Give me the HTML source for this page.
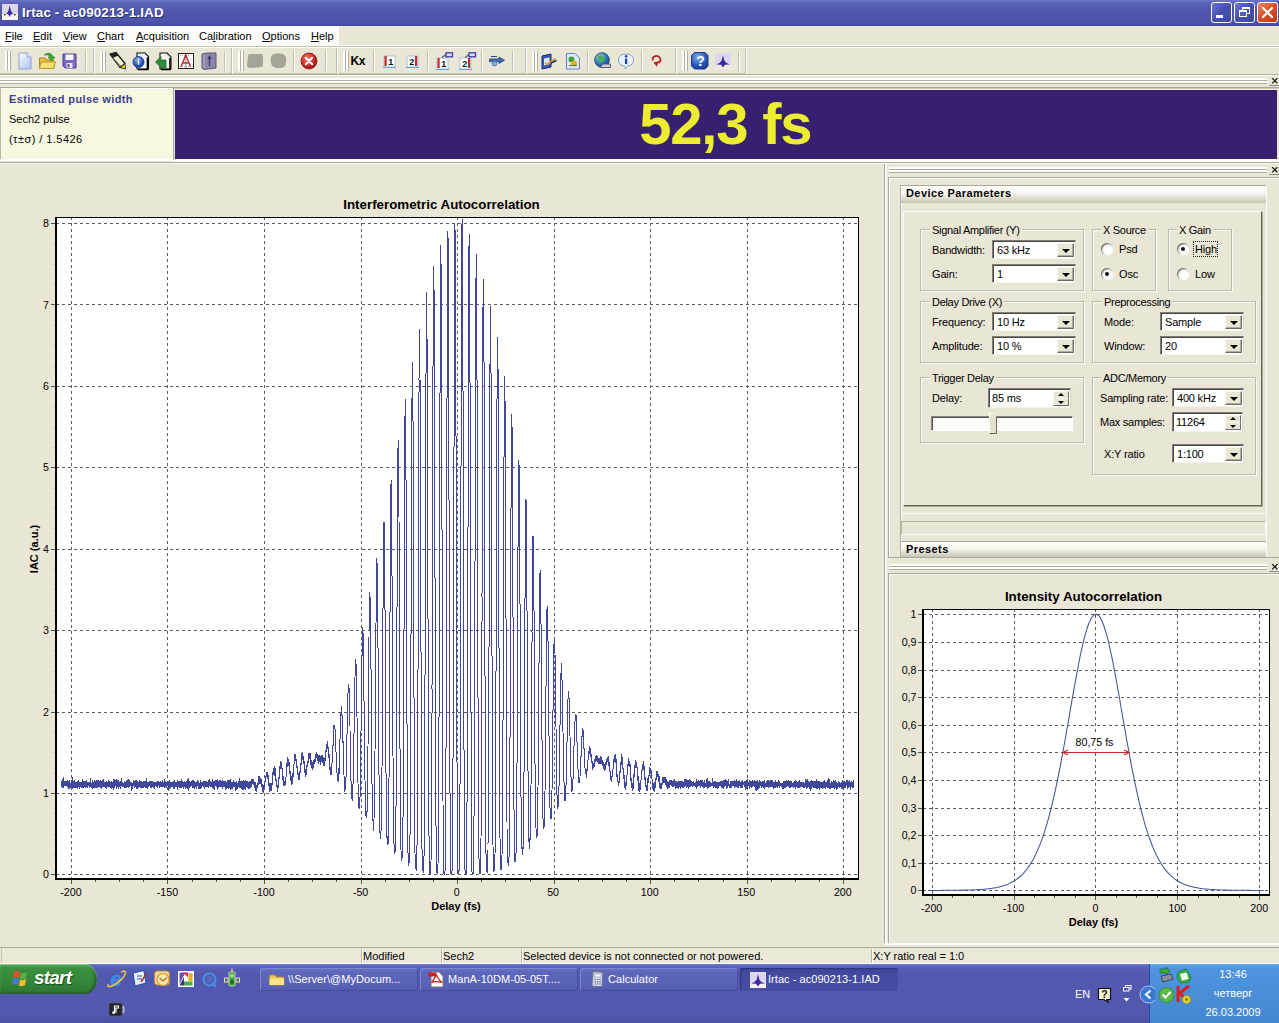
<!DOCTYPE html><html><head><meta charset="utf-8"><style>
*{box-sizing:border-box;margin:0;padding:0}
html,body{width:1279px;height:1023px;overflow:hidden;background:#e9e6d5;font-family:"Liberation Sans",sans-serif;font-size:11px;color:#000}
.a{position:absolute}
.t{position:absolute;white-space:nowrap;line-height:1}
.b{font-weight:bold}
.gb{position:absolute;border:1px solid #bcbaab;box-shadow:1px 1px 0 #fbfbf6, inset 1px 1px 0 #fbfbf6}
.gl{position:absolute;background:#e9e6d5;padding:0 2px;white-space:nowrap;line-height:1;font-size:11px;top:-5px;letter-spacing:-0.3px}
.cb{position:absolute;background:#fff;border:1px solid #7f7d72;border-right-color:#d8d6c8;border-bottom-color:#f4f3ec;box-shadow:inset 1px 1px 0 #4a4a44}
.cb .v{position:absolute;left:4px;top:4px;line-height:1;white-space:nowrap;font-size:11px;letter-spacing:-0.2px}
.dd{position:absolute;right:1px;top:2px;bottom:1px;width:17px;background:#e9e6d5;border:1px solid #f8f7f0;border-right-color:#6e6c62;border-bottom-color:#6e6c62;box-shadow:inset -1px -1px 0 #aeac9e}
.dd:after{content:"";position:absolute;left:4px;top:5px;border:4px solid transparent;border-top:4px solid #000;border-bottom:none}
.sp{position:absolute;right:1px;width:16px;height:8px;background:#e9e6d5;border:1px solid #f8f7f0;border-right-color:#6e6c62;border-bottom-color:#6e6c62}
.sp:after{content:"";position:absolute;left:4px;top:1px;border:3px solid transparent;border-bottom:3px solid #000;border-top:none}
.sd:after{border:3px solid transparent;border-top:3px solid #000;border-bottom:none;top:2px}
.hdr{position:absolute;background:linear-gradient(#fefefd 0%,#f6f5ee 45%,#d4d2c3 85%,#c6c4b4 100%)}
</style></head><body>
<div class="a" style="left:0;top:0;width:1279px;height:26px;background:linear-gradient(#6a78c8 0%,#5a62b8 12%,#5157ad 40%,#4e54aa 80%,#4a4fa6 94%,#3c409a 100%)"></div>
<div class="a" style="left:2px;top:4px;width:16px;height:16px;background:#d9d6ea"></div>
<svg class="a" style="left:2px;top:4px" width="16" height="16"><rect y="10" width="16" height="6" fill="#f6f5ee"/><path d="M7.7,1.5L9,7L11,9.5L8.6,11L7.7,13L6.8,11L4.4,9.5L6.4,7Z" fill="#3a2aa0"/><rect x="2" y="10" width="1.4" height="1.4" fill="#111"/><rect x="12" y="10" width="1.4" height="1.4" fill="#111"/></svg>
<div class="t" style="left:22px;top:6.199999999999999px;font-size:13.5px;color:#fff;font-weight:bold;letter-spacing:0.1px;text-shadow:1px 1px 0 #2a2f7a;">Irtac - ac090213-1.IAD</div>
<div class="a" style="left:1211px;top:2px;width:21px;height:21px;border:1px solid #fff;border-radius:3px;background:linear-gradient(135deg,#6a78c8,#4650ae 50%,#3e48a4)"></div>
<div class="a" style="left:1234px;top:2px;width:21px;height:21px;border:1px solid #fff;border-radius:3px;background:linear-gradient(135deg,#6a78c8,#4650ae 50%,#3e48a4)"></div>
<div class="a" style="left:1257px;top:2px;width:21px;height:21px;border:1px solid #fff;border-radius:3px;background:linear-gradient(135deg,#e88a68,#d84c24 50%,#c03c14)"></div>
<div class="a" style="left:1216px;top:15px;width:7px;height:3px;background:#fff"></div>
<div class="a" style="left:1242px;top:7px;width:8px;height:7px;border:1px solid #fff;border-top-width:2px"></div>
<div class="a" style="left:1239px;top:10px;width:8px;height:7px;border:1px solid #fff;border-top-width:2px;background:#5560b8"></div>
<svg class="a" style="left:1257px;top:2px" width="21" height="21"><path d="M6 6 L15 15 M15 6 L6 15" stroke="#fff" stroke-width="2.2" stroke-linecap="round"/></svg>
<div class="a" style="left:0;top:26px;width:339px;height:20px;background:#fcfcfa"></div>
<div class="t" style="left:5px;top:31.2px;font-size:11px;color:#000;"><u>F</u>ile</div>
<div class="t" style="left:33px;top:31.2px;font-size:11px;color:#000;"><u>E</u>dit</div>
<div class="t" style="left:63px;top:31.2px;font-size:11px;color:#000;"><u>V</u>iew</div>
<div class="t" style="left:97px;top:31.2px;font-size:11px;color:#000;"><u>C</u>hart</div>
<div class="t" style="left:136px;top:31.2px;font-size:11px;color:#000;"><u>A</u>cquisition</div>
<div class="t" style="left:199px;top:31.2px;font-size:11px;color:#000;">Ca<u>l</u>ibration</div>
<div class="t" style="left:262px;top:31.2px;font-size:11px;color:#000;"><u>O</u>ptions</div>
<div class="t" style="left:311px;top:31.2px;font-size:11px;color:#000;"><u>H</u>elp</div>
<div class="a" style="left:0;top:45px;width:1279px;height:1px;background:#fbfbf7"></div>
<div class="a" style="left:0;top:46px;width:1279px;height:1px;background:#c4c2b3"></div>
<div class="a" style="left:0;top:47px;width:1279px;height:1px;background:#fbfbf7"></div>
<div class="a" style="left:0px;top:48px;width:94px;height:26px;border-right:1px solid #c0beaf;border-bottom:1px solid #c0beaf;box-shadow:1px 0 0 #fff"></div>
<div class="a" style="left:5px;top:51px;width:3px;height:20px;border-left:2px solid #fdfdfa;border-right:1px solid #b0ae9f"></div>
<div class="a" style="left:8px;top:51px;width:3px;height:20px;border-left:2px solid #fdfdfa;border-right:1px solid #b0ae9f"></div>
<div class="a" style="left:95px;top:48px;width:137px;height:26px;border-right:1px solid #c0beaf;border-bottom:1px solid #c0beaf;box-shadow:1px 0 0 #fff"></div>
<div class="a" style="left:100px;top:51px;width:3px;height:20px;border-left:2px solid #fdfdfa;border-right:1px solid #b0ae9f"></div>
<div class="a" style="left:103px;top:51px;width:3px;height:20px;border-left:2px solid #fdfdfa;border-right:1px solid #b0ae9f"></div>
<div class="a" style="left:233px;top:48px;width:104px;height:26px;border-right:1px solid #c0beaf;border-bottom:1px solid #c0beaf;box-shadow:1px 0 0 #fff"></div>
<div class="a" style="left:238px;top:51px;width:3px;height:20px;border-left:2px solid #fdfdfa;border-right:1px solid #b0ae9f"></div>
<div class="a" style="left:241px;top:51px;width:3px;height:20px;border-left:2px solid #fdfdfa;border-right:1px solid #b0ae9f"></div>
<div class="a" style="left:338px;top:48px;width:188px;height:26px;border-right:1px solid #c0beaf;border-bottom:1px solid #c0beaf;box-shadow:1px 0 0 #fff"></div>
<div class="a" style="left:343px;top:51px;width:3px;height:20px;border-left:2px solid #fdfdfa;border-right:1px solid #b0ae9f"></div>
<div class="a" style="left:346px;top:51px;width:3px;height:20px;border-left:2px solid #fdfdfa;border-right:1px solid #b0ae9f"></div>
<div class="a" style="left:527px;top:48px;width:149px;height:26px;border-right:1px solid #c0beaf;border-bottom:1px solid #c0beaf;box-shadow:1px 0 0 #fff"></div>
<div class="a" style="left:532px;top:51px;width:3px;height:20px;border-left:2px solid #fdfdfa;border-right:1px solid #b0ae9f"></div>
<div class="a" style="left:535px;top:51px;width:3px;height:20px;border-left:2px solid #fdfdfa;border-right:1px solid #b0ae9f"></div>
<div class="a" style="left:677px;top:48px;width:69px;height:26px;border-right:1px solid #c0beaf;border-bottom:1px solid #c0beaf;box-shadow:1px 0 0 #fff"></div>
<div class="a" style="left:682px;top:51px;width:3px;height:20px;border-left:2px solid #fdfdfa;border-right:1px solid #b0ae9f"></div>
<div class="a" style="left:685px;top:51px;width:3px;height:20px;border-left:2px solid #fdfdfa;border-right:1px solid #b0ae9f"></div>
<div class="a" style="left:0;top:74px;width:746px;height:1px;background:#c0beaf"></div>
<svg class="a" style="left:0;top:47px" width="760" height="28" viewBox="0 47 760 28">
<path d="M85.5,51V71" stroke="#c2c0b0"/><path d="M86.5,51V71" stroke="#fdfdfa"/>
<path d="M224.5,51V71" stroke="#c2c0b0"/><path d="M225.5,51V71" stroke="#fdfdfa"/>
<path d="M293.5,51V71" stroke="#c2c0b0"/><path d="M294.5,51V71" stroke="#fdfdfa"/>
<path d="M325.5,51V71" stroke="#c2c0b0"/><path d="M326.5,51V71" stroke="#fdfdfa"/>
<path d="M373.5,51V71" stroke="#c2c0b0"/><path d="M374.5,51V71" stroke="#fdfdfa"/>
<path d="M427.5,51V71" stroke="#c2c0b0"/><path d="M428.5,51V71" stroke="#fdfdfa"/>
<path d="M481.5,51V71" stroke="#c2c0b0"/><path d="M482.5,51V71" stroke="#fdfdfa"/>
<path d="M512.5,51V71" stroke="#c2c0b0"/><path d="M513.5,51V71" stroke="#fdfdfa"/>
<path d="M587.5,51V71" stroke="#c2c0b0"/><path d="M588.5,51V71" stroke="#fdfdfa"/>
<path d="M641.5,51V71" stroke="#c2c0b0"/><path d="M642.5,51V71" stroke="#fdfdfa"/>
<path d="M738.5,51V71" stroke="#c2c0b0"/><path d="M739.5,51V71" stroke="#fdfdfa"/>
<defs><linearGradient id="pg" x1="0" y1="0" x2="1" y2="1"><stop offset="0" stop-color="#fff"/><stop offset="1" stop-color="#a8c0ec"/></linearGradient><radialGradient id="rx" cx="0.4" cy="0.35" r="0.7"><stop offset="0" stop-color="#f08070"/><stop offset="0.6" stop-color="#d02828"/><stop offset="1" stop-color="#901010"/></radialGradient><radialGradient id="hq" cx="0.4" cy="0.3" r="0.8"><stop offset="0" stop-color="#8ab4f0"/><stop offset="0.6" stop-color="#2858c0"/><stop offset="1" stop-color="#143890"/></radialGradient><radialGradient id="gl" cx="0.35" cy="0.3" r="0.8"><stop offset="0" stop-color="#a0e0b0"/><stop offset="0.5" stop-color="#3080c0"/><stop offset="1" stop-color="#1a3c88"/></radialGradient></defs>
<path d="M19,53H27L31,57V69H19Z" fill="url(#pg)" stroke="#8aa4d8" stroke-width="1"/><path d="M27,53V57H31" fill="#e8f0ff" stroke="#8aa4d8"/>
<path d="M39.5,58H45L46.5,60H54V68.5H39.5Z" fill="#e8c040" stroke="#a88820"/><path d="M41,62H55.5L53.5,68.5H39.5Z" fill="#f8e078" stroke="#b89828"/>
<path d="M44,55C48,52 52,53 53,57L55,57L51.5,61L48,57L50,57C49.5,55 47,54.5 44,55Z" fill="#38a838" stroke="#1c7a1c" stroke-width="0.6"/>
<path d="M63,54H76V68H65L63,66Z" fill="#7868c0" stroke="#4a3c98"/><rect x="65.5" y="54.5" width="8" height="5.5" fill="#f4f4fc"/><rect x="66.5" y="63" width="6" height="5" fill="#e8e6f4"/><rect x="67.5" y="64" width="2" height="3.5" fill="#5a4aa8"/>
<path d="M110,54L116,52.5L125,63.5L120,67.5Z" fill="#f4f0d0" stroke="#111" stroke-width="1.2"/><path d="M110,54L116,52.5L118.5,55.5L112.5,58Z" fill="#222"/><path d="M120,67.5L125,63.5L125.5,69Z" fill="#e8d020" stroke="#111" stroke-width="0.8"/><path d="M113,58L121,66" stroke="#777" stroke-width="0.8"/>
<path d="M137,53H145L148.5,56.5V69H137Z" fill="#eef2fb" stroke="#111" stroke-width="1.1"/><path d="M147.5,57.5V69.5H138" stroke="#000" stroke-width="1.6" fill="none"/><circle cx="138.5" cy="62" r="5.5" fill="url(#hq)" stroke="#10307a" stroke-width="0.8"/><rect x="137.8" y="60.6" width="1.5" height="4" fill="#fff"/><rect x="137.8" y="58.6" width="1.5" height="1.3" fill="#fff"/>
<path d="M160,53H167L171,57V69H160Z" fill="#f4f6f2" stroke="#111" stroke-width="1.1"/><path d="M170,58V69.5H161" stroke="#000" stroke-width="1.6" fill="none"/><path d="M155.5,62L161,56.5V60H166V68H161V67.5L155.5,62Z" fill="#2e8c3a" stroke="#1a6424" stroke-width="0.7"/>
<rect x="178.5" y="53.5" width="15" height="15" fill="#fff" stroke="#222" stroke-width="1"/><path d="M181,67L185.8,55L190.6,67M183,63H188.5" stroke="#c03030" stroke-width="1.4" fill="none"/><path d="M180,55.5H192M180,66.5H192" stroke="#c86060" stroke-width="0.6" stroke-dasharray="1,1"/><path d="M185.8,54V68" stroke="#444" stroke-width="0.6"/>
<path d="M202,54L207,53H216V68L204,69.5L202,68Z" fill="#8c86a8" stroke="#5c5680" stroke-width="1"/><path d="M209.5,57V66M207.8,59L209.5,56.5L211.2,59" stroke="#3c3670" stroke-width="1.3" fill="none"/><path d="M204,55V68" stroke="#b8b4cc" stroke-width="1"/>
<path d="M248,56Q248,54 250,54H261Q263,54 263,56V65Q263,67 261,67L250,68Q247,68 247,65Z" fill="#a4a497"/><path d="M272,55Q276,52 283,54Q287,56 286,62Q286,68 280,68Q272,69 271,63Q270,58 272,55Z" fill="#a4a497"/>
<circle cx="309" cy="61" r="8" fill="url(#rx)" stroke="#8a1818" stroke-width="0.8"/><path d="M305.8,57.8L312.2,64.2M312.2,57.8L305.8,64.2" stroke="#fff" stroke-width="2.2" stroke-linecap="round"/>
<text x="350.5" y="65" font-family="Liberation Sans" font-weight="bold" font-size="12" fill="#000" letter-spacing="-0.3">Kx</text>
<rect x="384" y="56" width="11" height="11" fill="#fff" stroke="#a8c4e8" stroke-width="1"/>
<rect x="384.5" y="56" width="2.2" height="10" fill="#c82828"/>
<path d="M383,67.5H396" stroke="#58a8d8" stroke-width="1"/>
<text x="388.2" y="65.3" font-family="Liberation Sans" font-size="9" font-weight="bold" fill="#111">1</text>
<rect x="407" y="56" width="11" height="11" fill="#fff" stroke="#a8c4e8" stroke-width="1"/>
<rect x="415" y="56" width="2.2" height="10" fill="#c82828"/>
<path d="M406,67.5H419" stroke="#58a8d8" stroke-width="1"/>
<text x="409.3" y="65.3" font-family="Liberation Sans" font-size="9" font-weight="bold" fill="#111">2</text>
<rect x="437" y="58" width="11" height="11" fill="#fff" stroke="#a8c4e8" stroke-width="1"/>
<rect x="437.5" y="58" width="2.2" height="10" fill="#c82828"/>
<path d="M436,69.5H449" stroke="#58a8d8" stroke-width="1"/>
<text x="441.2" y="67.3" font-family="Liberation Sans" font-size="9" font-weight="bold" fill="#111">1</text>
<path d="M442,57.5L446,54.5" stroke="#555" stroke-width="1.2" fill="none"/><rect x="446" y="52.8" width="6.5" height="4" fill="#dcdcf4" stroke="#3c3ca0" stroke-width="1.3"/>
<rect x="460" y="58" width="11" height="11" fill="#fff" stroke="#a8c4e8" stroke-width="1"/>
<rect x="468" y="58" width="2.2" height="10" fill="#c82828"/>
<path d="M459,69.5H472" stroke="#58a8d8" stroke-width="1"/>
<text x="462.3" y="67.3" font-family="Liberation Sans" font-size="9" font-weight="bold" fill="#111">2</text>
<path d="M465,57.5L469,54.5" stroke="#555" stroke-width="1.2" fill="none"/><rect x="469" y="52.8" width="6.5" height="4" fill="#dcdcf4" stroke="#3c3ca0" stroke-width="1.3"/>
<path d="M489.5,59H499V57L504.5,60.3L499,63.5V61.6H489.5Z" fill="#4a6cb0" stroke="#203c78" stroke-width="0.8"/><circle cx="494.5" cy="63.5" r="2.4" fill="#7ab4ec" stroke="#3060a0" stroke-width="0.7"/><path d="M491,56.5H497" stroke="#304880" stroke-width="1.1"/>
<path d="M542,56L551,54V67L542,69Z" fill="#3858b0" stroke="#182c70" stroke-width="1"/><path d="M544,58.5L549.5,57.5V64L544,65.5Z" fill="#dce8f8"/><path d="M545,62.5L547,64.5L555.5,58.5" stroke="#e0a020" stroke-width="1.6" fill="none"/><path d="M551,63L556.5,60.5" stroke="#182c70" stroke-width="1.5"/>
<path d="M566.5,53.5H575L579.5,58V69H566.5Z" fill="#dfe8f8" stroke="#6880c0" stroke-width="1"/><circle cx="571.5" cy="59.5" r="3" fill="#38a038"/><circle cx="574" cy="63.5" r="3" fill="#e0b020"/><path d="M569,65.5H577" stroke="#507848" stroke-width="1"/>
<circle cx="602" cy="60" r="7.3" fill="url(#gl)" stroke="#183878" stroke-width="0.8"/><path d="M598,56Q601,54 603,57Q606,59 603,62Q600,63 598,60Z" fill="#48b058"/><path d="M603,64H610.5V67.5H600Z" fill="#c8d0e0" stroke="#404858" stroke-width="0.8"/>
<path d="M618.5,60Q618.5,54 626,54Q633.5,54 633.5,60Q633.5,65.5 627.5,66L625.5,69L624.5,66Q618.5,65.5 618.5,60Z" fill="#e8f0fc" stroke="#8098c8" stroke-width="0.9"/><rect x="625" y="58.5" width="2.2" height="5.5" fill="#2040a0"/><circle cx="626.1" cy="56.3" r="1.3" fill="#2040a0"/>
<path d="M652.8,60.5A3.8,3.8 0 1 1 658.5,63" stroke="#a82828" stroke-width="1.8" fill="none"/><path d="M653.5,62.5L659,61L656.8,66.8Z" fill="#c02030"/>
<path d="M694.5,52.5H705L708,55.5V66L705,69H694.5L691.5,66V55.5Z" fill="url(#hq)" stroke="#183078" stroke-width="0.9"/><text x="696.2" y="66" font-family="Liberation Sans" font-weight="bold" font-size="14" fill="#fff">?</text>
<rect x="715" y="53" width="16" height="16" fill="#dcd6f0"/><rect x="715" y="64" width="16" height="5" fill="#ecebe6"/><path d="M723,55L724.3,60.5L726.5,63L730,64.5L725,64.8L723,67.5L721,64.8L716,64.5L719.5,63L721.7,60.5Z" fill="#3a2aa0"/>
</svg>
<div class="a" style="left:0px;top:74px;width:1279px;height:1px;background:#b4b2a3"></div>
<div class="a" style="left:0px;top:75px;width:1279px;height:1px;background:#f8f8f2"></div>
<div class="a" style="left:0px;top:78px;width:1267px;height:2px;background:#fdfdfa"></div>
<div class="a" style="left:0px;top:80px;width:1267px;height:1px;background:#aeac9e"></div>
<div class="a" style="left:0px;top:81px;width:1267px;height:2px;background:#fdfdfa"></div>
<div class="a" style="left:0px;top:83px;width:1267px;height:1px;background:#aeac9e"></div>
<div class="a" style="left:0px;top:87px;width:1279px;height:1px;background:#a6a597"></div>
<div class="a" style="left:0px;top:88px;width:1279px;height:1px;background:#c9c8b6"></div>
<div class="a" style="left:0px;top:89px;width:1279px;height:1px;background:#f4f4e6"></div>
<svg class="a" style="left:1269px;top:78px" width="10" height="8"><path d="M3.5 0.5 L8 5 M8 0.5 L3.5 5" stroke="#111" stroke-width="1.1" stroke-linecap="square"/><path d="M0 7.5 H10" stroke="#8a887a" stroke-width="1"/></svg>
<div class="a" style="left:0;top:88px;width:173px;height:73px;background:#f8f8e2;border-left:1px solid #b8b6a7;border-top:1px solid #fff"></div>
<div class="a" style="left:173px;top:88px;width:1px;height:72px;background:#a8a698"></div>
<div class="a" style="left:175px;top:90px;width:1102px;height:69px;background:#372070"></div>
<div class="a" style="left:0;top:159px;width:1279px;height:3px;background:#fdfdf8"></div>
<div class="a" style="left:0;top:161px;width:174px;height:1px;background:#e9e6d5"></div>
<div class="a" style="left:0;top:162px;width:1279px;height:1px;background:#aeac9e"></div>
<div class="a" style="left:0;top:163px;width:1279px;height:1px;background:#f6f6ee"></div>
<div class="t" style="left:9px;top:93.7px;font-size:11px;color:#3a3f8c;font-weight:bold;letter-spacing:0.37px;">Estimated pulse width</div>
<div class="t" style="left:9px;top:114.0px;font-size:11px;color:#000;">Sech2 pulse</div>
<div class="t" style="left:9px;top:134.0px;font-size:11px;color:#000;letter-spacing:0.45px;">(&tau;&plusmn;&sigma;) / 1.5426</div>
<div class="t" style="left:639.2px;top:94.9px;font-size:58px;color:#ecec30;font-weight:bold;letter-spacing:-1.2px;">52,3 fs</div>
<svg class="a" style="left:0;top:163px" width="885" height="785" viewBox="0 163 885 785">
<rect x="56" y="217" width="802" height="662" fill="#fff"/>
<path d="M71.5,217V879M167.5,217V879M264.5,217V879M361.5,217V879M457.5,217V879M554.5,217V879M650.5,217V879M747.5,217V879M843.5,217V879M56,874.5H858M56,793.5H858M56,712.5H858M56,630.5H858M56,549.5H858M56,467.5H858M56,386.5H858M56,304.5H858M56,223.5H858" stroke="#5e5e5e" stroke-width="1" stroke-dasharray="3,3" fill="none" shape-rendering="crispEdges"/>
<path d="M61.1,782 61.3,787 61.5,782 61.6,787 61.8,781 62.0,785 62.1,779 62.3,787 62.5,785 62.7,784 62.8,782 63.0,788 63.3,787 63.3,784 63.5,778 63.7,787 63.8,785 63.9,783 64.2,786 64.4,781 64.7,786 64.8,782 64.9,782 65.2,786 65.4,781 65.4,785 65.6,783 65.9,786 65.9,786 66.1,781 66.3,782 66.5,784 66.8,786 66.8,781 67.1,787 67.2,780 67.4,783 67.5,786 67.9,784 68.0,782 68.2,782 68.3,788 68.6,781 68.7,786 69.0,789 69.0,783 69.1,780 69.2,786 69.4,780 69.7,785 69.8,781 69.9,786 70.2,783 70.3,788 70.5,785 70.7,783 71.1,783 71.1,785 71.3,787 71.3,781 71.6,787 71.8,780 72.1,789 72.1,782 72.3,788 72.5,778 72.6,783 72.8,789 73.0,789 73.3,781 73.4,787 73.5,783 73.8,787 74.0,782 74.1,780 74.3,786 74.5,788 74.7,782 74.8,782 74.9,786 75.2,788 75.4,784 75.5,785 75.6,782 75.8,782 75.9,788 76.1,782 76.4,788 76.6,786 76.8,783 76.9,782 77.1,789 77.3,783 77.3,786 77.7,786 77.8,781 77.9,782 78.0,785 78.4,787 78.5,781 78.6,783 78.7,785 79.1,784 79.2,786 79.4,783 79.5,789 79.7,786 79.9,782 80.1,786 80.2,783 80.6,787 80.6,782 80.9,782 80.9,786 81.2,787 81.3,783 81.4,782 81.5,787 81.8,785 81.9,788 82.3,779 82.4,788 82.5,786 82.6,781 82.8,783 83.0,788 83.4,784 83.5,786 83.6,781 83.8,788 84.0,787 84.1,782 84.4,782 84.5,785 84.6,781 84.9,787 85.1,782 85.1,788 85.3,781 85.5,786 85.6,787 85.9,782 86.1,787 86.1,782 86.5,786 86.6,780 86.7,786 86.8,782 87.1,783 87.1,788 87.4,782 87.5,785 87.8,783 88.0,786 88.2,782 88.4,783 88.5,783 88.6,786 88.9,786 89.1,782 89.3,783 89.4,787 89.7,788 89.7,783 89.9,786 90.1,778 90.2,785 90.4,781 90.6,783 90.9,787 90.9,783 91.2,788 91.3,783 91.4,788 91.6,784 91.8,784 92.0,787 92.3,784 92.4,781 92.5,789 92.7,780 92.8,788 93.0,782 93.1,786 93.5,788 93.6,782 93.7,786 93.9,783 94.1,782 94.3,788 94.5,786 94.7,781 94.9,780 95.0,788 95.2,781 95.4,788 95.5,784 95.6,786 95.9,783 96.1,787 96.3,780 96.4,786 96.6,787 96.8,782 97.0,788 97.0,784 97.3,787 97.4,782 97.8,780 97.9,787 98.0,785 98.2,782 98.5,787 98.6,780 98.9,783 98.9,782 99.2,783 99.3,787 99.5,783 99.7,787 99.7,785 99.8,781 100.2,782 100.3,788 100.5,785 100.6,780 100.8,783 100.9,786 101.1,789 101.4,781 101.5,785 101.7,786 101.9,784 102.1,787 102.2,783 102.4,786 102.6,787 102.7,780 103.0,781 103.2,787 103.3,783 103.5,787 103.6,786 103.9,779 103.9,781 104.0,786 104.3,782 104.5,785 104.7,782 104.8,787 105.1,783 105.3,788 105.5,783 105.6,787 105.8,784 106.0,786 106.1,789 106.3,782 106.4,789 106.6,781 106.8,784 106.9,787 107.1,786 107.4,782 107.5,783 107.7,787 107.9,786 108.0,782 108.2,787 108.3,780 108.7,786 108.8,783 108.9,781 108.9,786 109.3,786 109.5,782 109.7,787 109.9,783 109.9,781 110.1,786 110.3,787 110.4,782 110.7,788 110.8,784 111.1,789 111.1,782 111.5,786 111.6,781 111.7,788 112.0,782 112.2,784 112.3,787 112.6,787 112.7,782 112.9,788 113.0,782 113.1,787 113.2,784 113.6,790 113.7,784 113.9,786 114.0,779 114.2,782 114.4,786 114.5,782 114.7,788 114.9,784 115.1,781 115.2,786 115.5,783 115.6,782 115.8,786 116.0,780 116.2,789 116.3,786 116.5,780 116.6,784 116.8,787 117.0,779 117.1,786 117.4,782 117.5,787 117.9,783 118.0,786 118.1,789 118.2,782 118.5,781 118.7,787 118.7,783 119.0,787 119.2,782 119.4,786 119.5,786 119.6,784 119.9,787 120.1,781 120.2,783 120.4,787 120.6,786 120.6,782 120.8,789 121.1,783 121.2,784 121.4,786 121.6,778 121.8,786 122.0,786 122.0,783 122.3,787 122.3,783 122.6,786 122.7,782 123.2,784 123.2,786 123.3,787 123.5,783 123.7,783 123.9,785 124.1,783 124.2,787 124.4,788 124.6,783 124.8,787 124.9,781 125.1,787 125.2,783 125.4,782 125.6,788 125.8,787 126.0,782 126.1,786 126.4,782 126.5,782 126.7,788 126.8,780 127.0,785 127.2,787 127.4,780 127.5,783 127.6,781 127.9,787 128.2,779 128.2,788 128.5,782 128.6,785 128.7,780 128.9,786 129.2,783 129.3,780 129.6,786 129.6,787 129.8,783 130.1,782 130.3,786 130.5,785 130.6,786 130.9,785 131.0,782 131.2,784 131.3,787 131.5,791 131.7,782 131.9,783 132.0,788 132.3,788 132.3,783 132.5,784 132.6,789 132.9,786 133.1,783 133.2,786 133.4,782 133.5,786 133.7,783 133.9,780 134.2,788 134.4,781 134.5,788 134.6,786 134.6,782 135.1,783 135.2,785 135.4,782 135.4,787 135.8,780 135.9,785 136.1,780 136.1,787 136.3,786 136.4,780 136.9,780 137.0,789 137.0,784 137.3,781 137.6,781 137.7,787 137.7,785 138.0,789 138.2,783 138.4,786 138.5,783 138.7,787 138.8,782 138.9,786 139.2,786 139.4,780 139.5,781 139.6,787 139.9,786 140.1,781 140.3,786 140.5,782 140.6,781 140.8,788 141.0,788 141.1,781 141.3,787 141.5,782 141.7,788 141.8,785 142.0,783 142.2,786 142.5,783 142.6,788 142.9,782 143.0,785 143.0,784 143.2,788 143.5,782 143.7,786 143.8,785 143.9,781 144.1,787 144.4,783 144.5,783 144.6,786 144.8,785 144.9,781 145.3,782 145.4,787 145.5,783 145.6,785 145.9,788 146.1,783 146.2,788 146.3,783 146.6,786 146.7,783 146.9,778 147.1,788 147.2,783 147.5,789 147.6,786 147.7,782 148.2,786 148.2,782 148.3,783 148.6,787 148.7,782 148.7,787 149.1,782 149.3,784 149.4,785 149.6,781 149.7,784 149.8,785 150.1,786 150.3,783 150.4,788 150.5,782 150.8,783 151.1,788 151.3,785 151.4,781 151.5,786 151.6,781 151.8,786 152.0,783 152.3,783 152.4,785 152.7,787 152.8,784 153.0,781 153.1,786 153.3,785 153.4,783 153.7,782 153.8,788 153.9,783 154.1,788 154.3,782 154.4,789 154.8,786 154.9,783 155.1,786 155.1,782 155.3,786 155.6,782 155.8,786 156.0,782 156.1,787 156.2,785 156.5,784 156.6,782 156.8,786 157.0,783 157.2,786 157.4,782 157.5,782 157.6,788 157.9,781 158.1,786 158.2,786 158.4,781 158.5,786 158.8,783 158.9,785 158.9,783 159.4,786 159.4,782 159.6,784 159.7,787 160.0,788 160.1,783 160.3,787 160.3,781 160.6,787 160.7,781 161.0,787 161.2,783 161.3,787 161.5,783 161.7,785 162.0,782 162.0,783 162.3,787 162.5,781 162.6,785 162.7,782 162.9,786 163.2,786 163.3,782 163.4,787 163.7,785 163.8,783 163.9,787 164.3,784 164.4,788 164.5,783 164.7,786 164.9,779 165.0,787 165.3,785 165.4,781 165.7,784 165.8,787 166.0,783 166.1,788 166.3,787 166.5,783 166.7,787 166.9,784 167.0,783 167.2,785 167.4,784 167.6,786 167.7,786 167.8,782 168.2,783 168.2,785 168.4,791 168.7,781 168.7,786 169.0,782 169.2,787 169.4,780 169.4,780 169.5,789 169.8,786 169.9,783 170.1,786 170.2,782 170.6,784 170.7,788 170.9,788 171.0,782 171.2,787 171.4,783 171.6,786 171.7,784 172.0,783 172.2,787 172.2,786 172.3,782 172.7,783 172.9,786 173.0,787 173.2,784 173.4,786 173.5,782 173.8,789 173.9,783 174.1,786 174.2,780 174.4,789 174.4,782 174.7,786 174.8,782 175.1,783 175.3,786 175.5,785 175.6,787 175.9,787 176.0,782 176.1,782 176.3,786 176.5,783 176.6,786 176.8,784 177.0,787 177.3,790 177.4,783 177.7,790 177.8,782 177.9,780 178.0,786 178.2,787 178.3,781 178.7,782 178.8,787 178.9,781 179.0,787 179.3,785 179.4,782 179.8,781 179.9,787 180.0,788 180.1,784 180.6,782 180.6,787 180.9,782 181.0,788 181.0,787 181.1,779 181.5,787 181.6,782 181.9,783 182.0,786 182.1,787 182.3,784 182.5,786 182.7,782 182.8,785 182.9,781 183.2,786 183.4,782 183.6,783 183.8,789 183.9,786 184.1,782 184.3,781 184.5,785 184.6,783 184.8,787 185.1,784 185.2,789 185.4,782 185.6,786 185.8,783 185.9,786 186.0,783 186.1,788 186.3,781 186.6,787 186.9,781 187.0,787 187.0,782 187.2,786 187.5,787 187.6,779 187.7,782 187.9,787 188.1,791 188.2,782 188.5,779 188.6,784 188.9,785 189.1,782 189.1,787 189.4,781 189.5,788 189.7,781 189.8,781 190.1,787 190.3,782 190.4,785 190.5,783 190.8,786 191.0,786 191.2,784 191.3,782 191.4,786 191.7,785 191.8,782 192.1,781 192.2,788 192.5,781 192.6,788 192.7,782 192.9,786 193.0,780 193.2,787 193.5,781 193.6,786 193.9,788 193.9,782 194.1,789 194.3,783 194.6,783 194.6,786 194.8,786 194.9,781 195.1,784 195.2,786 195.5,783 195.6,786 195.8,787 195.9,782 196.2,789 196.4,782 196.6,786 196.8,782 196.9,788 197.0,784 197.2,783 197.4,786 197.6,785 197.7,780 198.1,781 198.2,787 198.3,781 198.6,789 198.6,786 198.9,781 199.1,785 199.3,787 199.4,789 199.4,784 199.8,786 200.0,783 200.2,785 200.3,782 200.5,787 200.5,784 200.8,780 200.8,789 201.1,788 201.3,782 201.6,784 201.7,788 201.8,787 202.1,782 202.3,782 202.4,784 202.6,783 202.7,786 202.9,783 203.1,786 203.2,783 203.4,786 203.6,786 203.8,781 204.0,782 204.2,789 204.3,786 204.3,783 204.8,786 204.8,781 205.1,787 205.3,783 205.3,781 205.4,785 205.7,786 205.8,782 206.2,781 206.3,787 206.4,786 206.7,781 206.8,786 207.0,784 207.2,785 207.4,783 207.6,785 207.7,782 207.9,782 207.9,787 208.4,788 208.4,784 208.6,780 208.7,787 209.0,787 209.1,782 209.3,786 209.5,780 209.6,781 209.8,785 210.0,785 210.1,783 210.5,785 210.5,782 210.7,781 210.9,787 211.0,785 211.2,786 211.5,784 211.6,786 211.8,787 212.0,782 212.2,786 212.3,782 212.4,779 212.4,786 212.7,788 212.8,782 213.2,784 213.4,789 213.6,781 213.7,788 213.9,783 214.0,787 214.3,788 214.3,784 214.5,783 214.6,790 214.9,781 215.1,785 215.4,786 215.5,784 215.5,780 215.8,784 216.0,786 216.1,782 216.3,785 216.4,780 216.7,783 216.8,787 217.0,787 217.0,782 217.3,790 217.6,779 217.9,784 217.9,788 218.1,781 218.3,787 218.4,788 218.6,782 218.9,785 219.0,783 219.1,780 219.3,787 219.5,782 219.6,785 219.8,782 219.9,787 220.1,785 220.3,780 220.7,785 220.8,783 220.8,783 221.0,787 221.2,787 221.5,784 221.5,786 221.6,781 221.9,783 222.2,789 222.2,787 222.5,783 222.6,780 222.9,786 223.1,782 223.2,784 223.4,781 223.5,787 223.6,786 223.8,783 224.2,787 224.3,784 224.5,783 224.6,787 224.8,786 224.9,783 225.0,781 225.3,790 225.5,783 225.7,786 225.8,785 226.0,782 226.2,782 226.3,789 226.5,786 226.6,782 226.8,782 227.0,786 227.2,787 227.3,783 227.7,783 227.8,788 227.9,780 228.1,789 228.3,787 228.5,781 228.6,786 228.9,783 229.0,780 229.2,788 229.3,788 229.6,784 229.6,786 229.8,780 230.0,782 230.1,788 230.3,786 230.5,780 230.8,786 230.9,782 231.0,790 231.2,785 231.4,782 231.7,789 231.7,786 232.0,783 232.1,783 232.4,786 232.4,787 232.7,783 232.9,782 233.0,789 233.1,781 233.3,785 233.5,781 233.8,787 233.9,781 234.1,787 234.3,786 234.4,782 234.8,786 234.8,783 234.9,782 235.0,786 235.3,782 235.5,787 235.8,788 235.9,783 236.0,791 236.2,785 236.4,785 236.5,782 236.7,781 236.9,787 237.2,784 237.3,789 237.5,785 237.6,783 237.9,783 238.0,787 238.2,783 238.4,787 238.4,781 238.7,785 238.8,783 239.0,785 239.1,781 239.3,787 239.5,779 239.7,784 240.0,788 240.0,782 240.2,781 240.3,786 240.5,786 240.6,784 240.9,781 241.0,787 241.2,787 241.4,781 241.6,783 241.9,789 242.1,787 242.2,783 242.3,781 242.4,790 242.7,782 242.9,786 243.1,790 243.3,780 243.4,782 243.6,788 243.7,783 243.8,788 244.1,781 244.2,787 244.5,784 244.7,789 244.8,781 244.9,786 245.3,786 245.4,780 245.5,783 245.7,790 245.9,788 246.1,781 246.2,782 246.4,787 246.5,785 246.7,782 246.9,786 247.2,781 247.2,787 247.4,783 247.7,788 247.8,782 248.1,788 248.2,782 248.4,784 248.6,787 248.7,789 248.8,784 249.1,786 249.3,783 249.3,781 249.6,789 249.7,783 249.8,787 250.1,782 250.2,788 250.4,784 250.7,781 250.7,783 250.8,787 251.1,787 251.2,779 251.5,783 251.5,780 251.9,785 252.0,780 252.2,780 252.2,783 252.6,783 252.7,779 252.9,780 253.0,784 253.2,779 253.4,784 253.7,781 253.8,785 254.1,782 254.1,787 254.3,783 254.6,787 254.8,783 254.8,788 255.0,788 255.3,785 255.3,782 255.4,791 255.7,785 255.9,789 256.0,786 256.1,790 256.5,786 256.7,788 256.7,792 256.9,786 257.1,788 257.3,784 257.5,784 257.7,787 257.8,786 257.9,783 258.3,785 258.4,778 258.7,780 258.8,783 258.9,781 259.0,776 259.4,784 259.5,778 259.6,777 259.8,780 259.9,780 260.0,778 260.3,778 260.5,784 260.8,778 260.9,782 261.0,779 261.1,781 261.4,780 261.6,785 261.8,783 261.9,787 262.0,784 262.3,787 262.4,787 262.5,792 262.7,787 262.8,792 263.2,786 263.4,788 263.5,793 263.6,789 263.8,792 263.9,785 264.3,786 264.4,788 264.6,784 264.7,787 264.8,784 265.1,781 265.3,778 265.5,782 265.7,776 265.7,780 265.9,778 266.2,776 266.4,776 266.5,773 266.7,776 266.8,772 266.9,772 267.2,774 267.3,774 267.5,779 267.8,778 267.9,772 268.1,781 268.3,775 268.4,783 268.6,777 268.8,786 268.8,781 269.1,784 269.3,787 269.4,787 269.7,784 269.8,792 269.9,787 270.1,788 270.3,791 270.7,790 270.7,783 271.0,788 271.1,791 271.2,784 271.3,790 271.5,786 271.8,783 272.0,786 272.2,777 272.4,779 272.4,777 272.7,779 272.9,773 273.1,771 273.2,775 273.3,772 273.4,769 273.8,768 273.9,770 274.1,771 274.3,768 274.5,767 274.6,773 274.8,776 275.0,768 275.2,771 275.3,775 275.4,772 275.5,778 275.9,776 276.0,781 276.1,779 276.3,786 276.5,784 276.6,787 276.8,786 277.1,788 277.2,786 277.3,791 277.6,791 277.6,785 277.9,789 278.1,784 278.2,788 278.5,782 278.6,784 278.8,778 278.9,777 279.1,779 279.3,774 279.3,778 279.6,774 279.8,767 280.0,766 280.2,769 280.5,768 280.5,763 280.8,761 280.9,766 281.0,762 281.3,768 281.4,763 281.6,768 281.8,765 282.0,769 282.2,770 282.4,768 282.5,769 282.7,775 282.9,772 283.0,780 283.1,776 283.3,781 283.6,780 283.7,785 283.8,786 284.0,782 284.2,782 284.4,786 284.7,783 284.8,785 285.1,780 285.2,785 285.5,783 285.5,780 285.7,782 285.9,779 286.2,774 286.2,777 286.4,773 286.6,768 286.7,772 286.9,763 287.1,767 287.3,762 287.6,763 287.6,761 287.9,757 287.9,763 288.1,763 288.2,759 288.5,761 288.6,763 288.8,761 288.9,766 289.1,762 289.4,768 289.5,766 289.8,771 289.8,768 289.9,774 290.2,771 290.5,779 290.5,778 290.8,781 290.9,779 291.0,781 291.2,784 291.4,776 291.6,784 291.7,779 292.0,785 292.2,780 292.4,775 292.6,780 292.6,777 292.9,773 293.0,778 293.3,771 293.3,774 293.6,769 293.7,768 294.0,764 294.2,759 294.3,763 294.5,761 294.7,757 294.8,760 295.0,754 295.2,754 295.4,758 295.5,756 295.7,761 295.8,757 296.1,762 296.2,759 296.3,766 296.6,763 296.8,767 296.9,765 297.1,771 297.2,766 297.4,773 297.6,771 297.8,775 298.1,773 298.1,777 298.5,776 298.6,780 298.6,776 298.9,779 299.0,780 299.2,776 299.4,776 299.6,775 299.8,776 300.0,771 300.2,773 300.3,769 300.5,770 300.7,763 300.7,767 301.0,763 301.1,765 301.4,759 301.5,762 301.7,755 301.8,760 301.9,753 302.2,759 302.4,752 302.5,754 302.7,760 302.9,754 303.1,758 303.2,756 303.5,760 303.6,757 303.7,764 304.0,761 304.2,767 304.5,763 304.5,770 304.6,766 304.9,773 305.0,770 305.1,773 305.5,770 305.6,773 305.8,772 305.9,777 306.2,768 306.2,774 306.5,775 306.7,771 306.7,773 307.0,765 307.1,767 307.3,762 307.4,762 307.6,767 307.9,765 308.0,761 308.3,763 308.4,756 308.6,760 308.7,758 309.0,753 309.0,758 309.3,753 309.5,758 309.7,757 309.7,755 310.0,759 310.1,754 310.2,753 310.4,760 310.7,759 310.9,761 311.0,765 311.2,760 311.4,760 311.4,768 311.8,763 311.9,767 312.1,768 312.2,763 312.4,764 312.4,769 312.9,770 313.0,762 313.1,768 313.1,765 313.6,768 313.7,763 313.8,768 313.8,760 314.2,764 314.3,759 314.5,763 314.7,761 314.9,759 315.0,763 315.2,757 315.2,761 315.5,762 315.6,754 315.9,759 316.1,753 316.4,757 316.4,754 316.8,755 316.9,758 317.0,752 317.1,761 317.3,758 317.4,754 317.7,758 317.9,761 318.1,759 318.1,755 318.3,762 318.5,760 318.7,764 318.8,760 319.0,763 319.2,757 319.6,756 319.7,762 319.8,761 320.0,755 320.2,765 320.4,759 320.5,761 320.7,758 320.9,758 321.1,761 321.2,762 321.3,755 321.5,759 321.6,756 321.9,759 322.1,762 322.3,761 322.4,755 322.8,763 322.8,758 323.1,757 323.2,762 323.4,761 323.5,765 323.8,763 323.9,766 324.0,763 324.1,759 324.3,763 324.5,765 324.7,766 325.0,758 325.0,761 325.2,757 325.5,753 325.7,759 325.7,759 325.9,750 326.1,752 326.3,747 326.4,751 326.6,745 327.0,744 327.1,749 327.1,744 327.4,741 327.5,744 327.7,749 327.8,744 327.9,749 328.2,747 328.3,751 328.5,754 328.7,749 328.9,758 329.0,754 329.3,758 329.5,761 329.7,763 329.9,770 330.0,767 330.0,771 330.3,773 330.4,771 330.8,774 330.9,771 331.0,775 331.3,770 331.4,773 331.6,767 331.8,770 331.9,763 332.1,763 332.4,757 332.4,757 332.6,749 332.8,749 333.1,744 333.3,741 333.4,734 333.5,736 333.7,728 333.8,734 334.0,725 334.3,729 334.4,727 334.5,728 334.6,725 335.0,728 335.1,733 335.2,739 335.5,741 335.7,741 335.9,750 336.0,752 336.2,756 336.4,759 336.6,767 336.6,768 336.9,773 337.0,772 337.2,780 337.3,776 337.4,781 337.7,780 337.8,781 338.1,780 338.1,782 338.4,781 338.6,778 338.9,768 339.0,775 339.1,768 339.4,760 339.6,755 339.7,743 339.9,743 340.1,736 340.2,733 340.4,727 340.6,723 340.8,717 340.9,716 341.2,708 341.3,710 341.4,706 341.6,706 341.9,711 341.9,711 342.1,720 342.3,715 342.6,728 342.6,730 342.9,743 343.0,740 343.2,752 343.3,755 343.6,767 343.7,769 344.0,775 344.1,779 344.3,786 344.4,784 344.7,789 344.8,792 345.0,783 345.2,785 345.3,790 345.4,787 345.7,780 345.9,781 346.1,774 346.2,769 346.4,759 346.5,757 346.8,744 346.9,745 347.1,726 347.2,724 347.4,711 347.6,707 347.8,697 348.0,694 348.1,687 348.3,684 348.5,686 348.8,684 348.8,689 349.0,687 349.2,696 349.3,699 349.6,711 349.7,711 350.0,726 350.0,731 350.3,749 350.4,749 350.7,767 350.7,767 351.0,781 351.1,782 351.4,789 351.4,789 351.6,798 351.8,794 352.0,799 352.1,796 352.3,801 352.5,797 352.8,789 352.8,789 353.1,782 353.2,779 353.5,766 353.5,763 353.8,743 353.9,740 354.2,722 354.2,718 354.5,698 354.6,691 354.9,677 355.0,677 355.2,667 355.3,664 355.4,659 355.7,660 355.8,662 356.0,663 356.3,676 356.4,679 356.6,694 356.7,693 357.0,717 357.1,723 357.3,742 357.4,748 357.7,765 357.8,767 358.0,783 358.1,790 358.3,798 358.5,802 358.6,808 359.0,805 359.1,809 359.2,808 359.5,804 359.7,800 359.7,806 359.9,802 360.2,790 360.3,785 360.5,771 360.6,765 360.9,746 360.9,742 361.2,715 361.3,710 361.6,684 361.6,681 361.9,660 362.1,654 362.3,640 362.4,634 362.6,627 362.8,629 362.9,632 363.1,633 363.3,644 363.4,648 363.6,667 363.8,677 364.0,701 364.1,703 364.4,733 364.5,739 364.7,764 364.8,767 365.1,786 365.2,793 365.3,804 365.6,807 365.7,814 366.0,816 366.1,814 366.4,818 366.5,815 366.6,817 366.8,811 367.0,813 367.2,800 367.3,799 367.6,783 367.6,775 367.9,748 368.0,747 368.3,713 368.3,706 368.6,674 368.7,665 369.0,637 369.0,631 369.3,611 369.4,607 369.7,593 369.8,597 369.9,592 370.1,600 370.3,606 370.4,621 370.7,643 370.8,647 371.1,678 371.1,687 371.4,721 371.5,728 371.8,759 371.8,766 372.1,792 372.2,793 372.5,813 372.6,812 372.8,821 373.0,821 373.0,825 373.5,831 373.5,823 373.8,823 373.8,828 374.0,819 374.2,811 374.3,811 374.6,791 374.7,785 374.9,759 375.0,752 375.3,714 375.4,708 375.7,670 375.7,656 376.0,624 376.1,614 376.4,585 376.4,582 376.6,562 376.8,558 377.0,563 377.1,563 377.4,578 377.5,587 377.8,610 377.8,623 378.1,659 378.2,669 378.5,711 378.5,718 378.8,756 378.9,765 379.2,791 379.2,798 379.5,817 379.7,820 379.9,830 379.9,831 380.2,836 380.4,839 380.6,833 380.8,837 380.9,833 381.1,829 381.3,823 381.4,824 381.6,803 381.7,798 382.0,767 382.1,762 382.3,717 382.4,709 382.7,665 382.8,654 383.0,609 383.1,598 383.4,561 383.5,555 383.7,532 383.8,528 384.0,522 384.2,527 384.5,541 384.5,544 384.8,584 384.9,594 385.2,635 385.2,645 385.5,694 385.6,707 385.9,752 385.9,760 386.2,792 386.3,801 386.6,823 386.6,829 386.8,838 387.0,835 387.1,842 387.6,838 387.6,844 387.9,845 388.0,841 388.0,844 388.3,834 388.4,834 388.7,816 388.7,811 389.0,778 389.1,773 389.4,729 389.5,718 389.7,663 389.8,653 390.1,596 390.2,583 390.4,534 390.5,527 390.8,495 390.9,490 391.1,480 391.2,483 391.5,499 391.6,505 391.8,541 391.9,557 392.2,607 392.3,621 392.5,679 392.6,690 392.9,745 393.0,756 393.3,794 393.3,800 393.6,827 393.7,833 394.0,844 394.1,846 394.2,849 394.6,847 394.7,853 394.7,854 394.9,848 395.1,852 395.4,844 395.4,841 395.7,828 395.8,826 396.1,798 396.1,787 396.4,742 396.5,728 396.8,667 396.8,654 397.1,589 397.2,572 397.5,517 397.5,507 397.8,467 397.9,459 398.1,440 398.3,443 398.5,456 398.6,464 398.9,509 399.0,517 399.2,580 399.3,595 399.6,658 399.7,676 399.9,731 400.0,749 400.3,796 400.4,800 400.6,831 400.7,836 401.0,850 401.1,857 401.2,854 401.5,861 401.6,854 401.8,861 402.0,856 402.1,858 402.3,855 402.5,852 402.8,841 402.8,836 403.1,809 403.2,798 403.5,753 403.5,739 403.8,680 403.9,657 404.2,590 404.2,571 404.5,500 404.6,484 404.9,436 404.9,426 405.2,401 405.3,399 405.6,414 405.6,421 405.9,462 406.0,480 406.3,544 406.3,560 406.6,633 406.7,656 407.0,724 407.1,736 407.3,790 407.4,801 407.7,832 407.8,837 408.0,853 408.1,855 408.3,862 408.5,861 408.5,866 409.0,864 409.1,861 409.2,863 409.4,859 409.5,858 409.8,850 409.9,844 410.2,822 410.2,807 410.5,764 410.6,751 410.9,686 410.9,667 411.2,588 411.3,564 411.6,491 411.6,471 411.9,413 412.0,399 412.3,366 412.4,362 412.6,372 412.7,378 413.0,421 413.0,436 413.3,508 413.4,523 413.7,606 413.7,630 414.0,698 414.1,717 414.4,782 414.4,788 414.7,829 414.8,840 415.0,853 415.1,857 415.2,865 415.6,861 415.8,869 415.9,867 415.9,864 416.3,871 416.3,865 416.6,863 416.8,855 416.9,857 417.2,828 417.3,819 417.5,770 417.6,757 417.9,690 418.0,675 418.2,589 418.3,567 418.6,482 418.7,466 419.0,392 419.0,380 419.3,335 419.4,329 419.7,334 419.7,341 420.0,377 420.1,396 420.4,464 420.4,486 420.7,570 420.8,590 421.1,679 421.1,698 421.4,760 421.5,775 421.8,821 421.8,830 422.1,857 422.2,858 422.5,869 422.5,864 422.6,871 422.9,868 423.1,872 423.3,873 423.4,864 423.7,866 423.9,861 424.0,858 424.2,831 424.3,825 424.6,781 424.7,770 424.9,699 425.0,679 425.3,593 425.4,567 425.6,473 425.7,450 426.0,375 426.1,359 426.3,311 426.4,302 426.7,292 426.8,303 427.0,339 427.1,355 427.4,426 427.5,442 427.8,535 427.8,557 428.1,646 428.2,670 428.5,744 428.5,761 428.8,813 428.9,824 429.2,855 429.2,853 429.4,867 429.7,874 429.8,870 429.9,868 430.1,872 430.3,874 430.4,870 430.6,868 430.9,863 431.0,861 431.3,842 431.3,834 431.6,790 431.7,777 432.0,713 432.0,689 432.3,597 432.4,576 432.7,476 432.8,453 433.0,369 433.1,345 433.4,292 433.5,281 433.7,266 433.8,268 434.1,299 434.2,312 434.4,384 434.5,400 434.8,499 434.9,525 435.1,622 435.2,642 435.5,723 435.6,746 435.8,804 435.9,813 436.2,847 436.3,853 436.6,868 436.6,869 436.8,873 437.2,870 437.3,874 437.4,874 437.5,873 437.8,871 437.9,867 438.0,864 438.3,848 438.4,837 438.7,801 438.7,787 439.0,719 439.1,701 439.4,613 439.4,587 439.7,486 439.8,459 440.1,369 440.1,345 440.4,280 440.5,268 440.7,245 440.8,247 441.1,271 441.2,279 441.5,350 441.6,372 441.8,467 441.9,493 442.2,594 442.3,614 442.5,705 442.6,726 442.9,791 443.0,801 443.2,845 443.3,851 443.6,867 443.7,870 443.9,874 444.0,872 444.2,874 444.5,874 444.6,874 444.7,874 445.0,871 445.1,869 445.4,854 445.4,845 445.7,808 445.8,797 446.1,731 446.1,710 446.4,624 446.5,595 446.8,495 446.8,473 447.1,371 447.2,350 447.5,277 447.5,265 447.8,235 447.9,231 448.2,250 448.2,260 448.5,321 448.6,341 448.9,432 448.9,462 449.2,566 449.3,590 449.6,688 449.6,704 449.9,775 450.0,793 450.3,834 450.4,843 450.6,867 450.7,866 451.0,874 451.1,873 451.3,874 451.4,874 451.6,874 451.8,874 452.0,871 452.2,870 452.3,861 452.5,851 452.7,818 452.8,807 453.1,742 453.2,728 453.5,642 453.5,621 453.8,514 453.9,491 454.2,385 454.2,366 454.5,283 454.6,269 454.9,231 454.9,223 455.2,241 455.3,245 455.6,304 455.6,322 455.9,413 456.0,436 456.3,542 456.3,567 456.6,665 456.7,689 457.0,762 457.0,780 457.3,830 457.4,839 457.7,863 457.7,865 458.0,873 458.3,874 458.4,871 458.5,872 458.7,874 458.8,874 459.1,869 459.2,870 459.4,862 459.5,857 459.8,826 459.9,817 460.1,762 460.2,740 460.5,657 460.6,637 460.8,536 460.9,509 461.2,405 461.3,384 461.5,297 461.6,281 461.9,231 462.1,219 462.3,228 462.3,236 462.6,283 462.7,303 463.0,391 463.0,409 463.3,518 463.4,547 463.7,646 463.7,671 464.0,750 464.1,768 464.4,823 464.4,829 464.7,856 464.8,863 465.1,873 465.1,873 465.2,874 465.5,874 465.6,871 465.8,874 465.9,874 466.2,874 466.5,863 466.5,859 466.8,838 466.9,823 467.2,773 467.3,760 467.5,681 467.6,659 467.9,562 468.0,536 468.2,438 468.3,407 468.6,324 468.7,303 468.9,253 469.0,246 469.2,234 469.4,243 469.6,287 469.7,304 470.0,383 470.1,404 470.3,505 470.4,532 470.7,630 470.8,655 471.1,738 471.1,754 471.4,812 471.5,824 471.8,851 471.8,856 472.0,872 472.3,874 472.3,872 472.7,874 472.8,872 472.9,874 473.1,870 473.2,874 473.4,866 473.7,861 473.9,841 473.9,835 474.2,789 474.3,776 474.6,705 474.6,684 474.9,595 475.0,566 475.3,468 475.3,442 475.6,355 475.7,337 476.0,279 476.1,272 476.3,254 476.4,258 476.7,295 476.8,302 477.0,380 477.1,405 477.4,496 477.5,518 477.7,622 477.8,641 478.1,723 478.2,741 478.4,804 478.5,816 478.8,850 478.9,853 479.2,869 479.3,869 479.4,874 479.8,870 479.9,874 480.1,874 480.2,871 480.4,874 480.5,866 480.6,863 480.9,848 481.0,839 481.3,803 481.3,789 481.6,726 481.7,706 482.0,621 482.0,597 482.3,500 482.4,480 482.7,391 482.7,374 483.0,307 483.1,301 483.4,279 483.4,279 483.7,304 483.8,316 484.1,383 484.1,400 484.4,490 484.5,515 484.8,605 484.9,630 485.1,714 485.2,732 485.5,795 485.6,807 485.8,843 485.9,848 486.2,864 486.3,867 486.5,871 486.7,872 486.8,869 487.0,868 487.2,873 487.4,870 487.5,867 487.7,867 488.0,850 488.0,844 488.3,816 488.4,802 488.7,746 488.7,724 489.0,650 489.1,628 489.4,532 489.4,513 489.7,425 489.8,411 490.1,347 490.1,333 490.4,306 490.6,306 490.8,324 490.8,333 491.1,391 491.2,406 491.5,491 491.5,511 491.8,599 491.9,626 492.2,707 492.2,723 492.5,787 492.6,798 492.9,838 493.0,845 493.2,862 493.3,866 493.6,870 493.7,872 493.9,868 494.1,871 494.1,867 494.4,870 494.6,864 494.7,865 495.0,854 495.1,849 495.3,823 495.4,814 495.7,764 495.8,746 496.0,673 496.1,657 496.4,572 496.5,548 496.8,467 496.8,446 497.1,382 497.2,372 497.5,338 497.7,337 497.8,344 497.9,352 498.2,398 498.2,416 498.5,493 498.6,509 498.9,596 498.9,616 499.2,701 499.3,720 499.6,778 499.6,790 499.9,828 500.0,838 500.3,855 500.5,858 500.6,870 500.9,870 501.0,867 501.0,869 501.3,864 501.6,864 501.7,870 501.8,864 502.0,855 502.1,852 502.4,828 502.5,821 502.7,783 502.8,769 503.1,703 503.2,686 503.4,608 503.5,586 503.8,511 503.9,492 504.1,434 504.2,416 504.5,389 504.6,376 504.8,384 504.9,387 505.2,423 505.3,436 505.6,503 505.6,524 505.9,594 506.0,619 506.3,695 506.3,709 506.6,766 506.7,785 507.0,822 507.0,829 507.3,850 507.4,850 507.5,861 507.7,858 508.0,863 508.2,863 508.3,866 508.6,862 508.7,865 508.8,861 509.0,857 509.1,856 509.4,834 509.5,826 509.8,787 509.8,776 510.1,723 510.2,705 510.5,637 510.6,619 510.8,548 510.9,529 511.2,475 511.3,458 511.5,426 511.7,424 511.8,414 512.0,425 512.2,450 512.3,460 512.6,512 512.7,533 512.9,596 513.0,617 513.3,681 513.4,699 513.7,758 513.7,765 514.0,810 514.1,817 514.4,843 514.4,842 514.6,853 514.8,856 514.9,862 515.2,862 515.4,854 515.5,858 515.6,862 515.8,855 516.1,852 516.2,848 516.5,829 516.5,823 516.8,791 516.9,783 517.2,734 517.2,722 517.5,663 517.6,645 517.9,587 517.9,567 518.2,518 518.3,506 518.6,477 518.6,471 518.9,460 519.0,463 519.3,484 519.4,493 519.6,536 519.7,545 520.0,604 520.1,616 520.3,677 520.4,689 520.7,745 520.8,758 521.0,797 521.1,805 521.4,828 521.5,830 521.7,849 522.0,848 522.0,855 522.2,854 522.5,848 522.5,852 522.7,848 522.9,851 523.2,845 523.2,845 523.5,827 523.6,820 523.9,795 523.9,789 524.2,746 524.3,734 524.6,680 524.6,670 524.9,618 525.0,600 525.3,555 525.3,545 525.6,514 525.7,513 525.9,499 526.0,499 526.3,512 526.4,520 526.7,550 526.7,563 527.0,611 527.1,618 527.4,674 527.4,687 527.7,736 527.8,742 528.1,784 528.2,793 528.4,815 528.5,823 528.7,836 528.9,842 528.9,839 529.2,841 529.4,849 529.6,845 529.7,838 529.9,842 530.1,838 530.3,834 530.5,823 530.6,817 530.9,792 531.0,787 531.3,750 531.3,742 531.6,699 531.7,686 532.0,642 532.0,632 532.3,593 532.4,584 532.7,556 532.7,550 533.0,536 533.1,538 533.4,545 533.4,547 533.7,578 533.8,582 534.1,623 534.1,632 534.4,674 534.5,685 534.8,730 534.8,737 535.1,775 535.2,783 535.5,810 535.5,810 535.8,824 536.0,828 536.2,835 536.3,832 536.5,838 536.8,837 536.9,832 537.1,836 537.2,828 537.3,829 537.6,816 537.7,814 537.9,796 538.0,788 538.3,758 538.4,745 538.6,711 538.7,704 539.0,664 539.1,652 539.3,622 539.4,610 539.7,589 539.8,581 540.1,570 540.2,570 540.4,576 540.5,578 540.8,597 540.8,604 541.1,632 541.2,640 541.5,679 541.5,685 541.8,724 541.9,726 542.2,764 542.2,769 542.5,793 542.6,795 542.9,815 542.9,815 543.2,825 543.3,827 543.6,822 543.6,829 543.7,823 544.1,827 544.3,824 544.4,820 544.6,807 544.7,810 545.0,791 545.1,788 545.3,760 545.4,753 545.7,724 545.8,717 546.0,688 546.1,675 546.4,648 546.5,643 546.7,617 546.8,617 547.1,606 547.3,606 547.4,610 547.5,611 547.8,623 547.9,628 548.1,651 548.2,657 548.5,683 548.6,691 548.9,720 548.9,724 549.2,754 549.3,762 549.6,784 549.6,789 549.9,802 550.0,808 550.3,812 550.4,814 550.5,819 550.8,814 551.0,819 551.0,819 551.3,815 551.5,812 551.7,804 551.7,802 552.0,790 552.1,787 552.4,765 552.4,760 552.7,733 552.8,729 553.1,703 553.1,695 553.4,676 553.5,674 553.8,652 553.9,651 554.1,638 554.2,637 554.3,640 554.6,639 554.8,649 555.0,654 555.2,667 555.3,672 555.5,695 555.6,702 555.9,723 556.0,727 556.2,750 556.3,757 556.6,773 556.7,779 557.0,795 557.0,795 557.3,803 557.4,804 557.6,809 557.7,809 557.9,803 558.1,805 558.2,807 558.5,805 558.7,797 558.8,793 559.1,784 559.1,782 559.4,764 559.5,762 559.8,740 559.8,738 560.1,720 560.2,716 560.5,697 560.6,692 560.8,679 560.9,677 561.2,668 561.5,664 561.5,670 561.7,669 561.9,678 561.9,678 562.2,684 562.3,693 562.6,708 562.7,710 562.9,728 563.0,732 563.3,750 563.4,753 563.6,766 563.7,770 564.0,782 564.2,787 564.3,793 564.4,793 564.7,801 565.0,797 565.0,801 565.1,800 565.2,795 565.5,800 565.6,789 565.8,793 566.1,781 566.2,781 566.5,768 566.5,766 566.8,749 566.9,748 567.2,733 567.2,728 567.5,717 567.6,710 567.8,706 567.9,703 568.1,695 568.3,698 568.6,691 568.7,698 568.8,696 569.0,698 569.3,705 569.3,707 569.6,719 569.7,717 569.9,733 570.0,736 570.3,747 570.4,753 570.7,764 570.8,765 571.0,777 571.2,778 571.4,786 571.5,781 571.7,791 571.9,792 572.1,788 572.2,791 572.4,788 572.5,789 572.7,785 572.9,785 573.1,775 573.2,776 573.5,766 573.6,767 573.8,754 573.9,752 574.1,742 574.3,741 574.6,733 574.6,732 574.8,721 575.0,721 575.2,714 575.4,714 575.5,721 575.7,716 576.0,714 576.1,718 576.3,723 576.4,723 576.6,728 576.7,733 576.9,742 577.2,742 577.4,755 577.6,752 577.7,762 577.8,761 578.0,769 578.1,772 578.4,776 578.5,778 578.8,782 578.9,783 579.0,781 579.3,782 579.5,780 579.6,783 579.8,777 580.0,778 580.1,770 580.3,772 580.5,766 580.6,768 580.8,756 581.0,758 581.2,749 581.3,752 581.6,742 581.8,743 581.9,736 582.1,737 582.2,734 582.4,734 582.6,728 582.8,730 583.0,736 583.1,730 583.3,738 583.5,735 583.7,740 583.8,743 583.9,749 584.1,748 584.4,759 584.5,756 584.7,761 584.9,762 585.0,768 585.2,768 585.3,772 585.7,769 585.7,773 585.9,771 586.2,778 586.2,771 586.4,776 586.7,769 586.7,776 586.9,773 587.2,767 587.4,770 587.6,767 587.6,767 587.9,761 588.0,760 588.3,756 588.4,758 588.6,753 588.7,752 588.8,751 589.3,754 589.3,749 589.4,749 589.5,747 589.8,752 589.9,747 590.1,748 590.4,753 590.5,750 590.5,754 590.8,749 591.0,757 591.2,754 591.5,759 591.7,758 591.8,763 591.9,759 592.2,765 592.4,762 592.5,770 592.6,763 592.6,767 593.1,768 593.2,763 593.5,768 593.6,763 593.6,763 593.8,767 594.1,762 594.3,767 594.5,765 594.5,759 594.8,765 595.0,760 595.0,757 595.2,762 595.5,757 595.7,761 595.7,761 596.0,758 596.1,755 596.2,760 596.4,761 596.7,758 597.0,756 597.1,759 597.2,759 597.4,762 597.6,757 597.7,761 598.0,758 598.1,762 598.3,760 598.4,763 598.6,760 598.8,764 598.9,758 599.1,764 599.3,761 599.4,759 599.8,758 599.9,763 600.0,759 600.1,764 600.4,764 600.6,758 600.7,756 600.8,761 601.0,757 601.3,761 601.4,759 601.5,764 601.8,764 602.0,760 602.1,761 602.2,766 602.4,765 602.5,761 602.8,766 602.9,760 603.1,763 603.4,768 603.5,764 603.6,769 603.9,764 604.1,768 604.2,770 604.5,765 604.6,771 604.8,765 604.9,764 605.1,770 605.4,763 605.5,768 605.6,765 605.8,762 606.0,765 606.2,761 606.5,764 606.6,759 606.7,761 606.9,759 607.0,762 607.2,757 607.4,762 607.6,758 607.7,762 607.9,759 608.1,756 608.3,761 608.4,760 608.6,762 608.8,762 608.8,765 609.3,767 609.4,762 609.6,765 609.7,767 609.8,768 609.9,772 610.2,771 610.5,777 610.6,772 610.8,780 611.0,779 611.2,776 611.3,776 611.5,781 611.7,782 611.8,777 611.9,779 612.2,773 612.3,776 612.6,771 612.6,772 612.8,769 613.1,769 613.2,764 613.4,762 613.5,766 613.8,764 613.9,760 614.1,759 614.1,755 614.5,762 614.6,756 614.8,760 614.8,757 615.1,754 615.3,762 615.5,758 615.7,763 616.0,759 616.1,769 616.2,768 616.4,770 616.5,767 616.8,775 616.9,777 616.9,773 617.3,777 617.4,781 617.6,778 617.9,782 617.9,779 618.2,786 618.5,785 618.6,782 618.7,781 618.9,784 619.0,783 619.3,777 619.3,780 619.4,776 619.8,777 619.9,771 620.1,773 620.3,769 620.5,766 620.5,770 620.7,767 621.0,762 621.2,765 621.4,759 621.5,758 621.7,761 621.8,754 621.9,761 622.1,761 622.2,757 622.6,760 622.7,766 622.9,763 623.0,769 623.2,768 623.5,774 623.6,772 623.8,776 623.9,779 624.0,775 624.3,779 624.5,785 624.7,785 624.9,782 625.0,788 625.2,786 625.5,790 625.6,782 625.7,787 625.9,783 626.1,786 626.2,782 626.4,783 626.7,777 626.7,779 626.9,776 627.1,775 627.1,770 627.5,766 627.6,770 627.8,768 627.9,764 628.2,766 628.4,760 628.5,766 628.6,758 628.8,761 629.0,763 629.2,761 629.4,766 629.6,763 629.8,762 629.9,767 630.1,765 630.2,764 630.5,773 630.7,772 630.9,780 631.1,781 631.2,778 631.5,778 631.6,782 631.7,782 631.9,788 632.1,784 632.3,790 632.4,784 632.6,791 632.8,783 633.0,789 633.2,786 633.3,782 633.4,785 633.6,780 633.9,781 634.0,774 634.1,777 634.4,773 634.5,775 634.7,770 635.0,765 635.1,768 635.4,766 635.5,764 635.6,763 635.8,767 635.9,760 636.2,765 636.2,763 636.5,767 636.8,768 636.9,766 637.1,767 637.2,772 637.4,775 637.4,769 637.6,770 637.9,781 638.0,776 638.3,783 638.4,789 638.5,782 638.7,782 638.8,791 639.2,784 639.3,790 639.5,792 639.7,784 639.9,783 640.0,791 640.1,788 640.2,783 640.5,786 640.7,780 640.8,783 641.1,779 641.3,779 641.4,774 641.5,778 641.8,770 641.9,773 642.1,770 642.2,771 642.4,766 642.6,765 642.6,767 642.9,769 643.2,766 643.3,761 643.5,770 643.7,766 643.9,769 644.0,766 644.3,772 644.5,772 644.6,776 644.7,774 644.9,780 645.2,777 645.3,782 645.5,780 645.6,784 645.7,786 645.8,783 646.2,791 646.4,786 646.5,788 646.6,789 646.8,790 647.0,785 647.4,791 647.4,785 647.6,785 647.8,782 647.9,786 648.0,778 648.2,783 648.3,775 648.6,775 648.6,777 649.0,776 649.0,772 649.3,774 649.5,768 649.6,770 649.9,768 650.0,770 650.1,768 650.3,772 650.5,769 650.7,770 650.8,774 651.2,770 651.2,777 651.4,775 651.6,778 651.7,776 651.8,779 652.1,779 652.3,786 652.4,781 652.5,789 652.8,782 653.1,789 653.3,785 653.3,791 653.5,784 653.8,791 653.8,787 654.1,792 654.3,788 654.5,784 654.5,787 654.8,782 654.9,783 655.1,788 655.2,778 655.5,785 655.7,778 655.7,782 656.0,782 656.1,774 656.5,776 656.6,771 656.6,773 656.9,779 657.1,771 657.3,776 657.4,777 657.6,773 657.8,771 658.0,777 658.1,774 658.2,777 658.5,775 658.7,781 658.8,782 658.9,775 659.3,779 659.4,783 659.7,788 659.7,784 659.8,786 659.9,782 660.2,784 660.4,788 660.7,788 660.8,787 660.9,784 661.0,788 661.2,789 661.5,784 661.6,787 661.7,783 662.0,783 662.1,785 662.4,784 662.5,781 662.6,777 662.7,783 663.0,781 663.1,777 663.5,780 663.5,778 663.8,778 663.9,783 664.0,783 664.2,779 664.5,783 664.7,777 664.9,783 665.0,779 665.2,785 665.4,777 665.4,779 665.7,782 665.9,781 666.0,785 666.2,779 666.3,785 666.5,782 666.6,784 666.9,787 666.9,784 667.3,789 667.3,781 667.6,787 667.8,781 667.9,788 668.1,783 668.3,782 668.4,787 668.7,787 668.9,783 669.0,785 669.3,782 669.5,788 669.5,782 669.7,786 669.9,780 670.1,785 670.2,781 670.4,780 670.7,783 670.9,781 671.0,785 671.1,780 671.4,786 671.6,780 671.6,782 671.9,785 671.9,782 672.3,787 672.4,781 672.6,785 672.8,782 673.0,785 673.1,780 673.3,781 673.5,787 673.5,787 673.8,781 673.9,781 674.0,786 674.3,779 674.5,783 674.6,783 674.9,786 675.0,784 675.2,786 675.3,789 675.4,781 675.7,782 675.8,787 676.2,787 676.3,783 676.4,788 676.5,782 676.8,784 677.0,786 677.1,788 677.2,782 677.6,784 677.7,787 677.9,785 678.0,782 678.3,789 678.4,783 678.6,784 678.7,781 679.0,782 679.0,787 679.2,781 679.5,785 679.7,783 679.8,786 680.0,785 680.1,781 680.4,782 680.5,786 680.6,785 680.7,782 681.0,789 681.1,781 681.5,782 681.6,784 681.8,784 681.9,787 682.1,786 682.1,784 682.3,783 682.5,786 682.7,781 682.9,788 683.1,788 683.3,782 683.5,786 683.7,782 684.0,786 684.0,783 684.2,786 684.4,779 684.5,781 684.7,787 684.8,780 685.1,786 685.2,779 685.2,785 685.5,786 685.7,784 686.1,779 686.1,787 686.4,782 686.5,787 686.6,781 686.7,785 686.9,788 687.1,782 687.3,787 687.6,783 687.7,783 687.9,787 688.0,780 688.3,785 688.3,781 688.5,789 688.8,786 689.0,781 689.2,781 689.2,784 689.5,784 689.6,779 689.7,783 689.8,786 690.1,787 690.2,783 690.6,781 690.7,785 690.9,780 691.0,785 691.2,782 691.3,786 691.5,782 691.6,785 691.9,786 691.9,783 692.2,782 692.4,786 692.6,786 692.7,782 693.0,787 693.1,781 693.3,786 693.5,783 693.6,786 693.9,781 694.0,786 694.2,783 694.4,783 694.5,786 694.7,783 694.7,785 695.1,782 695.3,787 695.5,786 695.6,782 695.9,783 695.9,784 696.2,784 696.3,789 696.5,780 696.6,788 696.8,786 697.0,781 697.1,782 697.2,784 697.6,781 697.7,785 698.0,787 698.1,780 698.3,783 698.5,781 698.8,780 698.8,785 698.9,785 699.0,782 699.3,784 699.5,783 699.8,786 699.9,781 700.0,783 700.2,781 700.4,788 700.6,781 700.7,787 700.9,780 701.1,786 701.2,780 701.4,782 701.6,786 701.8,782 701.9,785 702.1,787 702.2,780 702.6,781 702.7,786 702.8,785 702.9,782 703.1,788 703.4,784 703.5,785 703.6,782 703.9,786 704.1,780 704.2,787 704.5,783 704.6,782 704.7,788 704.9,787 705.2,783 705.2,783 705.4,787 705.7,786 705.9,783 706.1,783 706.2,787 706.4,779 706.6,787 706.6,785 706.8,783 707.1,778 707.3,784 707.3,789 707.4,781 707.8,786 707.9,780 708.3,788 708.3,782 708.4,788 708.5,782 708.7,787 709.0,782 709.2,781 709.3,787 709.5,782 709.5,786 710.0,787 710.1,783 710.2,782 710.3,787 710.6,782 710.7,786 711.0,784 711.1,783 711.2,784 711.4,783 711.6,783 711.7,786 712.1,786 712.2,784 712.3,778 712.6,785 712.6,785 712.9,782 713.2,786 713.3,782 713.3,786 713.6,782 713.7,783 713.9,788 714.2,782 714.3,785 714.5,785 714.7,781 714.7,787 714.9,785 715.2,787 715.2,781 715.5,785 715.7,783 715.8,783 715.9,788 716.1,788 716.2,783 716.6,784 716.8,782 716.8,782 717.1,786 717.3,783 717.4,788 717.6,789 717.8,782 717.9,786 718.2,782 718.4,783 718.5,788 718.7,786 718.8,782 719.0,786 719.2,782 719.4,783 719.6,786 719.8,782 719.9,786 720.1,786 720.3,782 720.4,781 720.6,786 720.8,785 721.0,782 721.1,781 721.2,787 721.6,787 721.7,782 721.9,783 722.1,786 722.3,787 722.4,781 722.5,784 722.6,788 722.9,782 723.0,785 723.3,789 723.3,783 723.5,782 723.6,784 724.0,780 724.0,786 724.3,785 724.5,782 724.7,787 724.9,782 725.0,783 725.1,785 725.4,779 725.6,786 725.8,786 725.9,783 726.0,782 726.1,786 726.4,781 726.4,789 726.9,788 727.0,780 727.1,788 727.3,783 727.5,786 727.7,781 727.8,787 728.0,784 728.3,785 728.4,782 728.5,780 728.6,786 728.9,783 729.0,786 729.2,787 729.3,784 729.5,788 729.8,784 730.0,787 730.1,781 730.2,783 730.4,786 730.6,784 730.8,783 730.9,788 731.1,781 731.4,783 731.6,788 731.7,783 731.9,785 732.0,786 732.2,783 732.5,786 732.6,782 732.9,786 733.0,781 733.0,782 733.3,785 733.4,786 733.7,782 733.7,782 734.0,786 734.1,788 734.4,780 734.5,782 734.7,786 734.9,788 735.1,782 735.2,785 735.4,781 735.6,782 735.8,787 735.9,786 736.1,782 736.3,787 736.4,783 736.6,786 736.8,779 737.0,787 737.1,781 737.3,785 737.3,781 737.7,783 737.9,788 738.2,781 738.3,786 738.5,784 738.6,781 738.7,788 738.9,783 739.2,782 739.2,785 739.4,785 739.6,780 739.9,782 740.0,786 740.2,788 740.3,782 740.6,782 740.7,787 740.8,786 741.0,783 741.3,782 741.4,787 741.5,782 741.6,784 741.9,783 742.0,788 742.2,786 742.3,783 742.6,785 742.8,780 743.0,786 743.1,783 743.2,785 743.3,783 743.7,783 743.8,785 744.0,782 744.1,786 744.3,787 744.4,781 744.9,781 744.9,786 745.2,781 745.3,787 745.4,790 745.4,783 745.8,786 746.0,783 746.1,780 746.2,787 746.6,788 746.7,781 746.9,782 747.0,787 747.2,783 747.3,779 747.6,783 747.8,788 747.8,787 748.1,782 748.2,786 748.5,783 748.6,782 748.7,785 749.1,782 749.2,789 749.3,785 749.4,781 749.6,787 749.7,783 750.0,780 750.1,787 750.3,785 750.5,782 750.7,783 750.9,787 751.1,786 751.2,783 751.3,786 751.4,781 751.7,788 752.0,781 752.0,787 752.3,782 752.4,786 752.7,780 752.9,783 753.0,784 753.2,783 753.4,785 753.5,782 753.7,786 754.0,783 754.1,786 754.2,781 754.4,786 754.6,787 754.7,780 754.9,783 755.1,785 755.3,783 755.5,790 755.6,785 755.9,783 755.9,781 756.1,791 756.4,781 756.6,786 756.6,783 756.8,787 757.2,789 757.3,782 757.3,780 757.6,790 757.7,784 757.8,787 758.2,789 758.2,782 758.4,783 758.5,785 758.9,785 759.0,782 759.2,788 759.4,782 759.4,780 759.7,786 759.8,785 759.9,783 760.2,785 760.4,781 760.5,781 760.8,786 760.9,785 761.1,783 761.2,785 761.4,782 761.6,783 761.8,788 762.0,787 762.0,781 762.3,781 762.5,784 762.6,782 762.8,786 763.1,788 763.2,783 763.3,785 763.6,783 763.8,781 763.9,787 764.0,784 764.2,788 764.5,788 764.7,782 764.7,780 765.0,787 765.3,786 765.4,783 765.4,785 765.6,784 765.8,787 765.8,783 766.1,784 766.3,786 766.7,781 766.8,787 767.0,785 767.1,783 767.3,787 767.5,781 767.7,785 767.8,782 768.0,786 768.2,784 768.4,788 768.5,781 768.7,786 768.7,781 768.9,785 769.2,787 769.4,787 769.5,782 769.9,781 769.9,787 770.1,786 770.3,782 770.4,784 770.5,785 770.9,780 771.0,787 771.1,780 771.2,787 771.4,782 771.6,787 771.8,787 771.8,783 772.1,787 772.4,783 772.5,781 772.6,785 772.9,787 773.0,782 773.2,787 773.4,782 773.5,789 773.8,784 773.9,783 774.0,786 774.3,783 774.4,787 774.6,783 774.8,788 775.1,780 775.2,788 775.3,786 775.4,784 775.6,787 775.8,783 776.1,786 776.2,782 776.6,787 776.6,783 776.8,783 776.9,786 777.1,788 777.2,783 777.4,782 777.5,787 777.9,787 778.0,782 778.1,784 778.2,785 778.5,781 778.6,786 778.9,783 779.1,786 779.2,783 779.4,788 779.5,782 779.7,787 779.9,786 780.1,783 780.4,783 780.4,786 780.6,785 780.8,783 781.1,784 781.1,786 781.4,786 781.6,783 781.7,784 781.8,787 782.0,783 782.1,785 782.5,784 782.6,787 782.7,784 783.0,789 783.0,782 783.3,785 783.4,787 783.5,783 783.8,786 784.0,781 784.1,781 784.2,785 784.4,788 784.7,781 784.9,786 785.1,783 785.2,788 785.3,783 785.6,782 785.8,786 786.0,785 786.1,782 786.2,780 786.3,785 786.6,787 786.7,781 787.0,785 787.2,782 787.4,785 787.5,783 787.7,781 787.8,786 788.0,786 788.2,783 788.3,780 788.6,787 788.7,787 788.8,782 789.0,785 789.3,782 789.6,786 789.6,781 789.7,788 789.9,782 790.3,781 790.4,787 790.4,788 790.6,783 791.0,785 791.1,782 791.2,785 791.4,784 791.5,782 791.8,785 791.8,781 792.0,787 792.2,787 792.3,784 792.7,786 792.8,783 793.0,787 793.1,783 793.4,787 793.4,782 793.7,783 793.9,788 794.0,783 794.1,787 794.4,786 794.4,783 794.7,786 794.9,781 795.1,786 795.1,784 795.4,785 795.5,783 795.8,789 795.8,780 796.3,782 796.3,787 796.5,786 796.7,784 796.8,786 796.9,783 797.1,782 797.3,785 797.6,788 797.7,784 797.8,783 798.1,786 798.2,781 798.4,787 798.6,787 798.7,781 798.9,786 799.1,780 799.4,782 799.5,786 799.6,786 799.9,783 799.9,788 800.2,783 800.3,787 800.6,782 800.6,786 800.8,782 801.1,784 801.2,785 801.4,787 801.6,782 801.9,783 802.0,786 802.1,786 802.3,782 802.4,783 802.5,787 802.8,786 802.9,782 803.3,783 803.4,787 803.5,787 803.6,782 803.8,783 804.1,788 804.2,787 804.3,783 804.5,787 804.6,783 804.9,786 805.1,781 805.2,786 805.5,780 805.7,787 805.8,781 805.9,787 806.1,780 806.3,789 806.4,783 806.6,787 806.8,781 807.1,784 807.2,788 807.4,786 807.5,780 807.7,782 807.7,786 808.0,787 808.3,781 808.4,781 808.7,786 808.9,782 808.9,785 809.2,786 809.3,784 809.5,789 809.6,783 809.9,788 809.9,782 810.3,787 810.4,784 810.6,781 810.7,788 811.0,791 811.1,782 811.2,786 811.5,781 811.6,787 811.8,784 812.1,787 812.2,781 812.2,783 812.5,786 812.6,787 812.7,782 813.0,784 813.1,787 813.5,782 813.6,788 813.7,787 813.9,781 814.1,787 814.1,781 814.4,788 814.6,782 814.9,786 814.9,784 815.3,787 815.3,783 815.4,781 815.5,788 815.9,788 816.0,782 816.1,781 816.3,789 816.5,780 816.7,787 816.9,788 817.1,784 817.2,781 817.4,788 817.7,789 817.8,784 818.0,782 818.0,788 818.2,786 818.3,781 818.7,783 818.8,788 819.0,783 819.2,787 819.3,781 819.4,787 819.6,790 819.8,784 820.1,784 820.3,782 820.3,784 820.4,788 820.9,783 821.0,785 821.1,783 821.2,786 821.5,784 821.7,788 822.0,782 822.0,784 822.1,784 822.2,787 822.5,784 822.6,786 823.0,789 823.1,783 823.2,786 823.2,781 823.6,787 823.7,782 823.9,781 824.1,786 824.2,788 824.5,782 824.6,780 824.9,786 825.1,782 825.2,789 825.3,782 825.4,787 825.6,783 825.7,786 826.1,787 826.2,784 826.4,786 826.5,783 826.7,784 826.8,787 827.0,787 827.2,784 827.5,781 827.6,784 827.8,788 828.0,786 828.2,784 828.3,787 828.4,784 828.6,788 828.8,778 829.1,786 829.2,780 829.4,786 829.5,780 829.6,786 829.9,789 830.1,783 830.4,789 830.5,785 830.6,786 830.8,783 831.0,786 831.2,783 831.3,781 831.5,787 831.7,782 831.8,786 832.0,788 832.2,784 832.5,786 832.5,782 832.7,782 832.9,787 833.1,788 833.2,782 833.6,787 833.7,783 833.7,787 833.9,780 834.1,782 834.4,788 834.5,785 834.7,789 834.8,781 835.1,787 835.1,782 835.2,786 835.7,787 835.8,780 835.8,788 835.9,782 836.2,785 836.5,783 836.7,784 836.8,787 837.0,790 837.1,783 837.2,784 837.3,787 837.6,783 837.7,787 837.9,788 838.2,782 838.5,786 838.6,783 838.7,781 838.7,787 839.1,787 839.1,783 839.4,788 839.5,783 839.7,787 839.9,782 840.2,784 840.3,786 840.4,784 840.6,787 840.9,784 841.0,786 841.1,782 841.2,789 841.7,788 841.7,782 842.0,785 842.1,788 842.2,788 842.2,780 842.6,789 842.7,782 842.9,781 843.1,787 843.2,784 843.4,789 843.8,782 843.9,788 843.9,786 844.1,782 844.3,787 844.5,782 844.8,784 844.9,788 845.0,786 845.1,782 845.4,782 845.5,788 845.7,782 845.8,787 846.2,783 846.3,785 846.4,781 846.6,786 846.7,786 847.0,780 847.2,783 847.2,786 847.6,783 847.7,789 847.9,783 848.0,787 848.2,788 848.3,781 848.6,786 848.7,782 849.1,786 849.1,781 849.4,787 849.4,783 849.8,781 849.8,786 849.9,780 850.1,788 850.3,782 850.5,788 850.7,790 850.9,783 851.0,786 851.2,781 851.4,785 851.5,787 851.7,782 851.7,787 852.1,787 852.2,782 852.4,786 852.7,783 852.8,784 853.0,788 853.1,783 853.2,787 853.6,787 853.7,780 853.8,787 853.9,783" stroke="#40489c" stroke-width="1" fill="none" stroke-linejoin="round" shape-rendering="crispEdges"/>
<path d="M56,217.5H858.5V879" stroke="#000" stroke-width="1" fill="none" shape-rendering="crispEdges"/>
<path d="M56,217V879H859" stroke="#000" stroke-width="2" fill="none" shape-rendering="crispEdges"/>
<path d="M71.5,880v4M95.5,880v2M119.5,880v2M143.5,880v2M167.5,880v4M192.5,880v2M216.5,880v2M240.5,880v2M264.5,880v4M288.5,880v2M312.5,880v2M336.5,880v2M361.5,880v4M385.5,880v2M409.5,880v2M433.5,880v2M457.5,880v4M481.5,880v2M505.5,880v2M530.5,880v2M554.5,880v4M578.5,880v2M602.5,880v2M626.5,880v2M650.5,880v4M674.5,880v2M698.5,880v2M723.5,880v2M747.5,880v4M771.5,880v2M795.5,880v2M819.5,880v2M843.5,880v4" stroke="#555" stroke-width="1" shape-rendering="crispEdges"/>
<path d="M51,874.5h4M51,793.5h4M51,712.5h4M51,630.5h4M51,549.5h4M51,467.5h4M51,386.5h4M51,304.5h4M51,223.5h4" stroke="#555" stroke-width="1" shape-rendering="crispEdges"/>
<path d="M53,854.5h2M53,834.5h2M53,813.5h2M53,773.5h2M53,752.5h2M53,732.5h2M53,691.5h2M53,671.5h2M53,650.5h2M53,610.5h2M53,589.5h2M53,569.5h2M53,528.5h2M53,508.5h2M53,488.5h2M53,447.5h2M53,427.5h2M53,406.5h2M53,366.5h2M53,345.5h2M53,325.5h2M53,284.5h2M53,264.5h2M53,243.5h2" stroke="#c9c6b4" stroke-width="1" shape-rendering="crispEdges"/>
<g font-family="Liberation Sans" font-size="10.67" fill="#000">
<text x="70.9" y="895.5" text-anchor="middle">-200</text>
<text x="167.4" y="895.5" text-anchor="middle">-150</text>
<text x="264.0" y="895.5" text-anchor="middle">-100</text>
<text x="360.6" y="895.5" text-anchor="middle">-50</text>
<text x="456.6" y="895.5" text-anchor="middle">0</text>
<text x="553.1" y="895.5" text-anchor="middle">50</text>
<text x="649.7" y="895.5" text-anchor="middle">100</text>
<text x="746.2" y="895.5" text-anchor="middle">150</text>
<text x="842.8" y="895.5" text-anchor="middle">200</text>
<text x="49" y="878.4" text-anchor="end">0</text>
<text x="49" y="797.0" text-anchor="end">1</text>
<text x="49" y="715.6" text-anchor="end">2</text>
<text x="49" y="634.1" text-anchor="end">3</text>
<text x="49" y="552.7" text-anchor="end">4</text>
<text x="49" y="471.3" text-anchor="end">5</text>
<text x="49" y="389.9" text-anchor="end">6</text>
<text x="49" y="308.5" text-anchor="end">7</text>
<text x="49" y="227.0" text-anchor="end">8</text>
</g>
<g font-family="Liberation Sans" font-weight="bold" fill="#000">
<text x="441.5" y="208.5" font-size="13.33" text-anchor="middle">Interferometric Autocorrelation</text>
<text x="456" y="910" font-size="11" text-anchor="middle">Delay (fs)</text>
<text transform="translate(38,549) rotate(-90)" font-size="11" text-anchor="middle">IAC (a.u.)</text>
</g>
</svg>
<div class="a" style="left:884px;top:164px;width:1px;height:779px;background:#a9a798"></div>
<div class="a" style="left:885px;top:164px;width:2px;height:779px;background:#fdfdfa"></div>
<div class="a" style="left:885px;top:943px;width:394px;height:2px;background:#fdfdfa"></div>
<div class="a" style="left:889px;top:167px;width:378px;height:2px;background:#fdfdfa"></div>
<div class="a" style="left:889px;top:169px;width:378px;height:1px;background:#aeac9e"></div>
<div class="a" style="left:889px;top:170px;width:378px;height:2px;background:#fdfdfa"></div>
<div class="a" style="left:889px;top:172px;width:378px;height:1px;background:#aeac9e"></div>
<svg class="a" style="left:1269px;top:167px" width="10" height="8"><path d="M3.5 0.5 L8 5 M8 0.5 L3.5 5" stroke="#111" stroke-width="1.1" stroke-linecap="square"/><path d="M0 7.5 H10" stroke="#8a887a" stroke-width="1"/></svg>
<div class="a" style="left:888px;top:177px;width:391px;height:380px;border-top:1px solid #a9a798;border-left:1px solid #a9a798"></div>
<div class="a" style="left:889px;top:178px;width:390px;height:379px;border-top:1px solid #fdfdfa;border-left:1px solid #fdfdfa"></div>
<div class="a" style="left:1266px;top:185px;width:1px;height:372px;background:#fbfbf6"></div>
<div class="a" style="left:900px;top:185px;width:1px;height:372px;background:#b4b2a3"></div>
<div class="a" style="left:901px;top:203px;width:1px;height:338px;background:#fbfbf6"></div>
<div class="a" style="left:900px;top:185px;width:366px;height:1px;background:#a9a798"></div>
<div class="hdr" style="left:901px;top:186px;width:365px;height:17px"></div>
<div class="t" style="left:906px;top:188.2px;font-size:11px;color:#000;font-weight:bold;letter-spacing:0.42px;">Device Parameters</div>
<div class="a" style="left:903px;top:211px;width:359px;height:295px;border:1px solid #fbfbf6;border-right:1px solid #66645a;border-bottom:1px solid #66645a;box-shadow:1px 1px 0 #a9a798;"></div>
<div class="gb" style="left:920px;top:229px;width:164px;height:62px"><div class="gl" style="left:9px">Signal Amplifier (Y)</div></div>
<div class="t" style="left:932px;top:244.79999999999998px;font-size:11px;color:#000;letter-spacing:-0.15px;">Bandwidth:</div>
<div class="cb" style="left:992px;top:240px;width:84px;height:19px"><div class="v">63 kHz</div><div class="dd"></div></div>
<div class="t" style="left:932px;top:268.59999999999997px;font-size:11px;color:#000;letter-spacing:-0.15px;">Gain:</div>
<div class="cb" style="left:992px;top:264px;width:84px;height:19px"><div class="v">1</div><div class="dd"></div></div>
<div class="gb" style="left:1092px;top:229px;width:64px;height:62px"><div class="gl" style="left:8px">X Source</div></div>
<div class="gb" style="left:1168px;top:229px;width:64px;height:62px"><div class="gl" style="left:8px">X Gain</div></div>
<div class="a" style="left:1101px;top:243px;width:12px;height:12px;border-radius:50%;background:radial-gradient(circle at 65% 65%,#fff 30%,#e4e2d6 80%);box-shadow:inset 1px 1px 1px #6b6a60, 0.5px 0.5px 0 #fff"></div>
<div class="t" style="left:1119px;top:244.0px;font-size:11px;color:#000;letter-spacing:-0.15px;">Psd</div>
<div class="a" style="left:1101px;top:268px;width:12px;height:12px;border-radius:50%;background:radial-gradient(circle at 65% 65%,#fff 30%,#e4e2d6 80%);box-shadow:inset 1px 1px 1px #6b6a60, 0.5px 0.5px 0 #fff"></div>
<div class="a" style="left:1105px;top:272px;width:4px;height:4px;border-radius:50%;background:#111"></div>
<div class="t" style="left:1119px;top:268.59999999999997px;font-size:11px;color:#000;letter-spacing:-0.15px;">Osc</div>
<div class="a" style="left:1177px;top:243px;width:12px;height:12px;border-radius:50%;background:radial-gradient(circle at 65% 65%,#fff 30%,#e4e2d6 80%);box-shadow:inset 1px 1px 1px #6b6a60, 0.5px 0.5px 0 #fff"></div>
<div class="a" style="left:1181px;top:247px;width:4px;height:4px;border-radius:50%;background:#111"></div>
<div class="t" style="left:1195px;top:244.0px;font-size:11px;color:#000;letter-spacing:-0.15px;">High</div>
<div class="a" style="left:1193px;top:241px;width:25px;height:16px;border:1px dotted #222"></div>
<div class="a" style="left:1177px;top:268px;width:12px;height:12px;border-radius:50%;background:radial-gradient(circle at 65% 65%,#fff 30%,#e4e2d6 80%);box-shadow:inset 1px 1px 1px #6b6a60, 0.5px 0.5px 0 #fff"></div>
<div class="t" style="left:1195px;top:268.59999999999997px;font-size:11px;color:#000;letter-spacing:-0.15px;">Low</div>
<div class="gb" style="left:920px;top:301px;width:164px;height:62px"><div class="gl" style="left:9px">Delay Drive (X)</div></div>
<div class="t" style="left:932px;top:316.5px;font-size:11px;color:#000;letter-spacing:-0.15px;">Frequency:</div>
<div class="cb" style="left:992px;top:312px;width:84px;height:19px"><div class="v">10 Hz</div><div class="dd"></div></div>
<div class="t" style="left:932px;top:340.59999999999997px;font-size:11px;color:#000;letter-spacing:-0.15px;">Amplitude:</div>
<div class="cb" style="left:992px;top:336px;width:84px;height:19px"><div class="v">10 %</div><div class="dd"></div></div>
<div class="gb" style="left:1092px;top:301px;width:164px;height:62px"><div class="gl" style="left:9px">Preprocessing</div></div>
<div class="t" style="left:1104px;top:316.5px;font-size:11px;color:#000;letter-spacing:-0.15px;">Mode:</div>
<div class="cb" style="left:1160px;top:312px;width:84px;height:19px"><div class="v">Sample</div><div class="dd"></div></div>
<div class="t" style="left:1104px;top:340.59999999999997px;font-size:11px;color:#000;letter-spacing:-0.15px;">Window:</div>
<div class="cb" style="left:1160px;top:336px;width:84px;height:19px"><div class="v">20</div><div class="dd"></div></div>
<div class="gb" style="left:920px;top:377px;width:164px;height:66px"><div class="gl" style="left:9px">Trigger Delay</div></div>
<div class="t" style="left:932px;top:392.5px;font-size:11px;color:#000;letter-spacing:-0.15px;">Delay:</div>
<div class="cb" style="left:988px;top:388px;width:83px;height:20px"><div class="v" style="left:3px">85 ms</div><div class="sp" style="top:2px"></div><div class="sp sd" style="bottom:1px"></div></div>
<div class="a" style="left:931px;top:416px;width:142px;height:15px;background:#fbfbf7;border:1px solid #8a887c;border-right-color:#fff;border-bottom-color:#fff;box-shadow:inset 1px 1px 0 #55534b"></div>
<div class="a" style="left:989px;top:413px;width:8px;height:21px;background:#e4e1d0;border:1px solid #fff;border-right-color:#6a685e;border-bottom-color:#6a685e;clip-path:polygon(0 0,50% 0,100% 22%,100% 100%,0 100%)"></div>
<div class="gb" style="left:1092px;top:377px;width:164px;height:98px"><div class="gl" style="left:8px">ADC/Memory</div></div>
<div class="t" style="left:1100px;top:392.5px;font-size:11px;color:#000;letter-spacing:-0.2px;">Sampling rate:</div>
<div class="cb" style="left:1172px;top:388px;width:72px;height:19px"><div class="v">400 kHz</div><div class="dd"></div></div>
<div class="t" style="left:1100px;top:416.8px;font-size:11px;color:#000;letter-spacing:-0.25px;">Max samples:</div>
<div class="cb" style="left:1172px;top:412px;width:71px;height:20px"><div class="v" style="left:3px">11264</div><div class="sp" style="top:2px"></div><div class="sp sd" style="bottom:1px"></div></div>
<div class="t" style="left:1104px;top:448.7px;font-size:11px;color:#000;letter-spacing:-0.15px;">X:Y ratio</div>
<div class="cb" style="left:1172px;top:444px;width:72px;height:19px"><div class="v">1:100</div><div class="dd"></div></div>
<div class="a" style="left:901px;top:521px;width:365px;height:14px;border:1px solid #b4b2a3;border-right-color:#fbfbf6;border-bottom-color:#fbfbf6"></div>
<div class="a" style="left:901px;top:513px;width:365px;height:1px;background:#fbfbf6"></div>
<div class="a" style="left:900px;top:541px;width:366px;height:1px;background:#a9a798"></div>
<div class="hdr" style="left:901px;top:542px;width:365px;height:15px"></div>
<div class="t" style="left:906px;top:544.0px;font-size:11px;color:#000;font-weight:bold;letter-spacing:0.42px;">Presets</div>
<div class="a" style="left:888px;top:557px;width:391px;height:17px;background:#e9e6d5"></div>
<div class="a" style="left:888px;top:557px;width:391px;height:1px;background:#a9a798"></div>
<div class="a" style="left:889px;top:564px;width:378px;height:2px;background:#fdfdfa"></div>
<div class="a" style="left:889px;top:566px;width:378px;height:1px;background:#aeac9e"></div>
<div class="a" style="left:889px;top:567px;width:378px;height:2px;background:#fdfdfa"></div>
<div class="a" style="left:889px;top:569px;width:378px;height:1px;background:#aeac9e"></div>
<svg class="a" style="left:1269px;top:564px" width="10" height="8"><path d="M3.5 0.5 L8 5 M8 0.5 L3.5 5" stroke="#111" stroke-width="1.1" stroke-linecap="square"/><path d="M0 7.5 H10" stroke="#8a887a" stroke-width="1"/></svg>
<div class="a" style="left:888px;top:573px;width:391px;height:1px;background:#a9a798"></div>
<div class="a" style="left:889px;top:574px;width:390px;height:1px;background:#f6f6ee"></div>
<div class="a" style="left:888px;top:574px;width:1px;height:369px;background:#a9a798"></div>
<div class="a" style="left:889px;top:575px;width:1px;height:368px;background:#f6f6ee"></div>
<svg class="a" style="left:888px;top:575px" width="391" height="372" viewBox="888 575 391 372">
<rect x="923" y="609" width="346" height="286" fill="#fff"/>
<path d="M932.5,609V895M1014.5,609V895M1095.5,609V895M1177.5,609V895M1259.5,609V895M923,890.5H1269M923,863.5H1269M923,835.5H1269M923,808.5H1269M923,780.5H1269M923,752.5H1269M923,725.5H1269M923,697.5H1269M923,670.5H1269M923,642.5H1269M923,614.5H1269" stroke="#5e5e5e" stroke-width="1" stroke-dasharray="3,3" fill="none" shape-rendering="crispEdges"/>
<path d="M928.0,890.4 929.2,890.4 930.5,890.4 931.7,890.4 932.9,890.4 934.1,890.4 935.4,890.4 936.6,890.4 937.8,890.4 939.1,890.4 940.3,890.4 941.5,890.3 942.7,890.3 944.0,890.3 945.2,890.3 946.4,890.3 947.7,890.3 948.9,890.3 950.1,890.3 951.3,890.3 952.6,890.3 953.8,890.3 955.0,890.3 956.3,890.2 957.5,890.2 958.7,890.2 959.9,890.2 961.2,890.2 962.4,890.1 963.6,890.1 964.9,890.1 966.1,890.1 967.3,890.0 968.5,890.0 969.8,890.0 971.0,889.9 972.2,889.9 973.5,889.8 974.7,889.8 975.9,889.7 977.1,889.7 978.4,889.6 979.6,889.5 980.8,889.4 982.1,889.4 983.3,889.3 984.5,889.2 985.7,889.0 987.0,888.9 988.2,888.8 989.4,888.6 990.7,888.5 991.9,888.3 993.1,888.1 994.3,887.9 995.6,887.7 996.8,887.5 998.0,887.2 999.3,886.9 1000.5,886.6 1001.7,886.3 1002.9,885.9 1004.2,885.5 1005.4,885.1 1006.6,884.7 1007.9,884.2 1009.1,883.6 1010.3,883.0 1011.5,882.4 1012.8,881.8 1014.0,881.0 1015.2,880.2 1016.5,879.4 1017.7,878.5 1018.9,877.5 1020.1,876.5 1021.4,875.3 1022.6,874.1 1023.8,872.8 1025.1,871.4 1026.3,869.9 1027.5,868.3 1028.7,866.6 1030.0,864.8 1031.2,862.8 1032.4,860.7 1033.7,858.5 1034.9,856.1 1036.1,853.6 1037.3,850.9 1038.6,848.1 1039.8,845.1 1041.0,841.9 1042.3,838.5 1043.5,834.9 1044.7,831.2 1045.9,827.2 1047.2,823.1 1048.4,818.7 1049.6,814.1 1050.9,809.3 1052.1,804.4 1053.3,799.2 1054.5,793.8 1055.8,788.2 1057.0,782.3 1058.2,776.4 1059.5,770.2 1060.7,763.8 1061.9,757.3 1063.1,750.7 1064.4,743.9 1065.6,737.0 1066.8,730.0 1068.1,723.0 1069.3,715.9 1070.5,708.8 1071.7,701.8 1073.0,694.7 1074.2,687.8 1075.4,680.9 1076.7,674.3 1077.9,667.8 1079.1,661.5 1080.3,655.4 1081.6,649.7 1082.8,644.3 1084.0,639.2 1085.3,634.5 1086.5,630.3 1087.7,626.5 1088.9,623.2 1090.2,620.4 1091.4,618.1 1092.6,616.3 1093.9,615.1 1095.1,614.4 1096.3,614.3 1097.5,614.8 1098.8,615.8 1100.0,617.4 1101.2,619.5 1102.5,622.2 1103.7,625.3 1104.9,629.0 1106.1,633.1 1107.4,637.6 1108.6,642.5 1109.8,647.8 1111.1,653.5 1112.3,659.4 1113.5,665.6 1114.7,672.1 1116.0,678.7 1117.2,685.5 1118.4,692.4 1119.7,699.4 1120.9,706.5 1122.1,713.6 1123.3,720.6 1124.6,727.7 1125.8,734.7 1127.0,741.6 1128.3,748.4 1129.5,755.1 1130.7,761.7 1131.9,768.1 1133.2,774.3 1134.4,780.4 1135.6,786.2 1136.9,791.9 1138.1,797.4 1139.3,802.7 1140.5,807.7 1141.8,812.6 1143.0,817.2 1144.2,821.6 1145.4,825.9 1146.7,829.9 1147.9,833.7 1149.1,837.3 1150.4,840.8 1151.6,844.0 1152.8,847.1 1154.0,850.0 1155.3,852.7 1156.5,855.3 1157.7,857.7 1159.0,860.0 1160.2,862.1 1161.4,864.1 1162.6,866.0 1163.9,867.8 1165.1,869.4 1166.3,870.9 1167.6,872.4 1168.8,873.7 1170.0,874.9 1171.2,876.1 1172.5,877.2 1173.7,878.2 1174.9,879.1 1176.2,880.0 1177.4,880.8 1178.6,881.5 1179.8,882.2 1181.1,882.8 1182.3,883.4 1183.5,884.0 1184.8,884.5 1186.0,885.0 1187.2,885.4 1188.4,885.8 1189.7,886.2 1190.9,886.5 1192.1,886.8 1193.4,887.1 1194.6,887.4 1195.8,887.6 1197.0,887.8 1198.3,888.1 1199.5,888.2 1200.7,888.4 1202.0,888.6 1203.2,888.7 1204.4,888.9 1205.6,889.0 1206.9,889.1 1208.1,889.2 1209.3,889.3 1210.6,889.4 1211.8,889.5 1213.0,889.6 1214.2,889.6 1215.5,889.7 1216.7,889.8 1217.9,889.8 1219.2,889.9 1220.4,889.9 1221.6,890.0 1222.8,890.0 1224.1,890.0 1225.3,890.1 1226.5,890.1 1227.8,890.1 1229.0,890.1 1230.2,890.2 1231.4,890.2 1232.7,890.2 1233.9,890.2 1235.1,890.2 1236.4,890.2 1237.6,890.3 1238.8,890.3 1240.0,890.3 1241.3,890.3 1242.5,890.3 1243.7,890.3 1245.0,890.3 1246.2,890.3 1247.4,890.3 1248.6,890.3 1249.9,890.3 1251.1,890.3 1252.3,890.4 1253.6,890.4 1254.8,890.4 1256.0,890.4 1257.2,890.4 1258.5,890.4 1259.7,890.4 1260.9,890.4 1262.2,890.4 1263.4,890.4" stroke="#44529a" stroke-width="1.05" fill="none"/>
<rect x="1073" y="735" width="43" height="14" fill="#fff"/>
<path d="M1063,752.5H1129" stroke="#d02828" stroke-width="1.2"/>
<path d="M1068,750.0L1063,752.5L1068,755.0M1124,750.0L1129,752.5L1124,755.0" stroke="#d02828" stroke-width="1.2" fill="none"/>
<text x="1094.5" y="745.5" font-family="Liberation Sans" font-size="10.67" text-anchor="middle">80,75 fs</text>
<path d="M923,609.5H1269.5V895" stroke="#000" stroke-width="1" fill="none" shape-rendering="crispEdges"/>
<path d="M923,609V895H1270" stroke="#000" stroke-width="2" fill="none" shape-rendering="crispEdges"/>
<path d="M932.5,896v4M952.5,896v2M973.5,896v2M993.5,896v2M1014.5,896v4M1034.5,896v2M1054.5,896v2M1075.5,896v2M1095.5,896v4M1116.5,896v2M1136.5,896v2M1157.5,896v2M1177.5,896v4M1198.5,896v2M1218.5,896v2M1239.5,896v2M1259.5,896v4M918,890.5h4M918,863.5h4M918,835.5h4M918,808.5h4M918,780.5h4M918,752.5h4M918,725.5h4M918,697.5h4M918,670.5h4M918,642.5h4M918,614.5h4" stroke="#555" stroke-width="1" shape-rendering="crispEdges"/>
<g font-family="Liberation Sans" font-size="10.67" fill="#000">
<text x="931.6" y="912" text-anchor="middle">-200</text>
<text x="1013.5" y="912" text-anchor="middle">-100</text>
<text x="1095.4" y="912" text-anchor="middle">0</text>
<text x="1177.3" y="912" text-anchor="middle">100</text>
<text x="1259.2" y="912" text-anchor="middle">200</text>
<text x="916.5" y="894.4" text-anchor="end">0</text>
<text x="916.5" y="866.8" text-anchor="end">0,1</text>
<text x="916.5" y="839.2" text-anchor="end">0,2</text>
<text x="916.5" y="811.6" text-anchor="end">0,3</text>
<text x="916.5" y="784.0" text-anchor="end">0,4</text>
<text x="916.5" y="756.3" text-anchor="end">0,5</text>
<text x="916.5" y="728.7" text-anchor="end">0,6</text>
<text x="916.5" y="701.1" text-anchor="end">0,7</text>
<text x="916.5" y="673.5" text-anchor="end">0,8</text>
<text x="916.5" y="645.9" text-anchor="end">0,9</text>
<text x="916.5" y="618.3" text-anchor="end">1</text>
</g>
<g font-family="Liberation Sans" font-weight="bold" fill="#000">
<text x="1083.5" y="600.8" font-size="13.33" text-anchor="middle">Intensity Autocorrelation</text>
<text x="1093.5" y="926" font-size="11" text-anchor="middle">Delay (fs)</text>
</g></svg>
<div class="a" style="left:0;top:947px;width:1279px;height:1px;background:#a9a798"></div>
<div class="a" style="left:0;top:948px;width:1279px;height:16px;background:#ebe8d8"></div>
<div class="a" style="left:361px;top:949px;width:1px;height:14px;background:#b8b6a7"></div>
<div class="a" style="left:362px;top:949px;width:1px;height:14px;background:#fff"></div>
<div class="a" style="left:441px;top:949px;width:1px;height:14px;background:#b8b6a7"></div>
<div class="a" style="left:442px;top:949px;width:1px;height:14px;background:#fff"></div>
<div class="a" style="left:521px;top:949px;width:1px;height:14px;background:#b8b6a7"></div>
<div class="a" style="left:522px;top:949px;width:1px;height:14px;background:#fff"></div>
<div class="a" style="left:871px;top:949px;width:1px;height:14px;background:#b8b6a7"></div>
<div class="a" style="left:872px;top:949px;width:1px;height:14px;background:#fff"></div>
<div class="a" style="left:1px;top:948px;width:1px;height:15px;background:#c4c2b3"></div>
<div class="t" style="left:363px;top:951px;font-size:11px">Modified</div>
<div class="t" style="left:443px;top:951px;font-size:11px">Sech2</div>
<div class="t" style="left:523px;top:951px;font-size:11px">Selected device is not connected or not powered.</div>
<div class="t" style="left:873px;top:951px;font-size:11px">X:Y ratio real = 1:0</div>
<div class="a" style="left:0;top:963px;width:1279px;height:1px;background:#fff"></div>
<div class="a" style="left:0;top:964px;width:1279px;height:59px;background:linear-gradient(#6a7acc 0,#5760b6 3px,#5158ae 12px,#5259af 50px,#4a50a4 100%)"></div>
<div class="a" style="left:0;top:964px;width:97px;height:30px;border-radius:0 12px 12px 0/0 15px 15px 0;background:linear-gradient(#5aa85a 0,#3c8f3e 15%,#35883a 55%,#2f7a34 90%,#2a6c30 100%);box-shadow:inset 0 1px 1px #8fd08f, inset -2px -1px 2px #245a28"></div>
<div class="t" style="left:34px;top:968px;font-size:19px;font-weight:bold;font-style:italic;color:#fff;text-shadow:1px 1px 1px #1c4a20;letter-spacing:-0.8px">start</div>
<svg class="a" style="left:11px;top:969px" width="20" height="20"><path d="M3,3Q6,1 9,3L8,9Q5,7 2,9Z" fill="#e05030"/><path d="M10,3.5Q13,5 16,3L15,9Q12,11 9,9.5Z" fill="#58b048"/><path d="M2,10Q5,8 8,10L7,16Q4,14 1,16Z" fill="#4878d8"/><path d="M9,10.5Q12,12 15,10L14,16Q11,18 8,16.5Z" fill="#f0c030"/></svg>
<svg class="a" style="left:100px;top:966px" width="150" height="55" viewBox="100 966 150 55">
<text x="110.5" y="986" font-family="Liberation Sans" font-weight="bold" font-style="italic" font-size="20" fill="#3c8ce8" stroke="#3c8ce8" stroke-width="0.5">e</text><path d="M108.5,984Q106,989 114,985Q124,979 125.5,973Q126,970 121,972" stroke="#e8c040" stroke-width="1.6" fill="none"/>
<path d="M133,973L144,970.5L146,983L135,986Z" fill="#e8f2fc" stroke="#3050b0" stroke-width="1.2"/><path d="M137,976H142M137,979H142" stroke="#3050b0" stroke-width="1.2"/><path d="M141,982L146.5,973.5" stroke="#b03030" stroke-width="1.5"/>
<rect x="154.5" y="971" width="15" height="14" rx="3" fill="#f0d8a0" stroke="#c88830" stroke-width="1"/><circle cx="163" cy="979.5" r="6" fill="#fbe8b0" stroke="#d09838" stroke-width="1.2"/><path d="M159.5,978L163,981L167,977.5" stroke="#b07018" stroke-width="1.3" fill="none"/>
<rect x="178" y="971" width="16" height="16" fill="#fff"/><path d="M179.5,972.5L185.5,972.5L179.5,984Z" fill="#7050a8"/><path d="M183,972.5H188L188,977.5Z" fill="#d83030"/><rect x="188.5" y="973" width="4" height="8" fill="#e8b020"/><rect x="184" y="981.5" width="8.5" height="4" fill="#48a848"/><path d="M179.5,985.5L184,977V985.5Z" fill="#303888"/>
<circle cx="209.5" cy="979.5" r="6" fill="none" stroke="#4a90e0" stroke-width="2.2"/><path d="M212.5,983L216,987" stroke="#4a90e0" stroke-width="2.2"/><circle cx="209.5" cy="979.5" r="3.6" fill="#5868c0"/>
<rect x="229" y="972" width="6" height="14" rx="1" fill="#38a040" stroke="#e8e0a0" stroke-width="0.8"/><path d="M232,968.5V972" stroke="#e8e0a0" stroke-width="1.2"/><rect x="224.5" y="978" width="3.5" height="4" fill="none" stroke="#e8e0a0" stroke-width="1"/><rect x="236" y="978" width="3.5" height="4" fill="none" stroke="#e8e0a0" stroke-width="1"/><rect x="230.3" y="974" width="3.4" height="3.5" fill="#90e090"/><rect x="230.3" y="980" width="3.4" height="3.5" fill="#186820"/>
<rect x="109" y="1003" width="13" height="13" rx="1.5" fill="#22222a" stroke="#55556a" stroke-width="0.8"/><path d="M114.5,1012.5V1006H118.5V1008H116V1012.5" stroke="#fff" stroke-width="1.2" fill="none"/><ellipse cx="113.8" cy="1012.6" rx="1.7" ry="1.3" fill="#fff"/><path d="M123,1006Q125,1009.5 123,1013" stroke="#c8c8e0" stroke-width="1.2" fill="none"/>
</svg>
<div class="a" style="left:260px;top:968px;width:158px;height:23px;border-radius:3px;background:linear-gradient(#6a74c4 0,#5c65b9 20%,#5a62b6 80%,#5159ae 100%);box-shadow:inset 1px 1px 0 #7a86d0, inset -1px -1px 0 #474ea0"></div>
<div class="t" style="left:288px;top:974px;font-size:11px;color:#fff;letter-spacing:0.05px">\\Server\@MyDocum...</div>
<svg class="a" style="left:268px;top:971px" width="18" height="16"><path d="M1.5,4H7L8.5,6H16V14H1.5Z" fill="#e8c850" stroke="#a88828" stroke-width="0.9"/><path d="M1.5,7.5H16V14H1.5Z" fill="#f8e488"/></svg>
<div class="a" style="left:420px;top:968px;width:158px;height:23px;border-radius:3px;background:linear-gradient(#6a74c4 0,#5c65b9 20%,#5a62b6 80%,#5159ae 100%);box-shadow:inset 1px 1px 0 #7a86d0, inset -1px -1px 0 #474ea0"></div>
<div class="t" style="left:448px;top:974px;font-size:11px;color:#fff;letter-spacing:0.05px">ManA-10DM-05-05T....</div>
<svg class="a" style="left:428px;top:971px" width="18" height="17"><path d="M3,1H11L15,5V16H3Z" fill="#fff" stroke="#777"/><path d="M4,11Q8,5 8.5,3.5Q9,7 14,11.5Q9,10 4,11Z" fill="none" stroke="#d02020" stroke-width="1.3"/><rect x="0.5" y="1.5" width="8" height="4" fill="#c82020"/></svg>
<div class="a" style="left:580px;top:968px;width:158px;height:23px;border-radius:3px;background:linear-gradient(#6a74c4 0,#5c65b9 20%,#5a62b6 80%,#5159ae 100%);box-shadow:inset 1px 1px 0 #7a86d0, inset -1px -1px 0 #474ea0"></div>
<div class="t" style="left:608px;top:974px;font-size:11px;color:#fff;letter-spacing:0.05px">Calculator</div>
<svg class="a" style="left:590px;top:971px" width="16" height="17"><rect x="2.5" y="1" width="10" height="14.5" fill="#d8dcec" stroke="#6c7088" transform="rotate(4 8 8)"/><rect x="4.5" y="3" width="6.5" height="3" fill="#f4f8ff" stroke="#8088a8" stroke-width="0.6"/><path d="M4.5,8.5H11M4.5,10.8H11M4.5,13H11" stroke="#5060a0" stroke-width="1.2" stroke-dasharray="1.4,1"/></svg>
<div class="a" style="left:740px;top:968px;width:158px;height:23px;border-radius:3px;background:linear-gradient(#3d4496 0,#444ba0 30%,#464da2 100%);box-shadow:inset 1px 1px 1px #2c3280"></div>
<div class="t" style="left:768px;top:974px;font-size:11px;color:#fff;letter-spacing:0.05px">Irtac - ac090213-1.IAD</div>
<svg class="a" style="left:750px;top:972px" width="16" height="16"><rect width="16" height="16" fill="#dcd6f0"/><rect y="11" width="16" height="5" fill="#f4f3ee"/><path d="M8,2L9.3,7.5L11.5,10L15,11.5L10,11.8L8,14.5L6,11.8L1,11.5L4.5,10L6.7,7.5Z" fill="#3a2aa0"/></svg>
<div class="a" style="left:1149px;top:964px;width:130px;height:59px;background:linear-gradient(#6aa8e8 0,#4e94de 4px,#4a8ed8 50%,#4486d0 100%);border-left:1px solid #2c4a98"></div>
<div class="t" style="left:1075px;top:988.5px;font-size:11px;color:#fff">EN</div>
<svg class="a" style="left:1095px;top:984px" width="60" height="22" viewBox="1095 984 60 22"><path d="M1098.5,988.5H1110.5V999.5H1107L1108,1002L1104,999.5H1098.5Z" fill="#f8f4d0" stroke="#111" stroke-width="1.2"/><text x="1101.3" y="998" font-family="Liberation Sans" font-weight="bold" font-size="10.5" fill="#111">?</text><rect x="1125.5" y="985.5" width="5.5" height="3.5" fill="none" stroke="#fff" stroke-width="1"/><rect x="1123.5" y="987.5" width="5.5" height="3.5" fill="#5158ae" stroke="#fff" stroke-width="1"/><path d="M1123.5,998H1129.5L1126.5,1001.5Z" fill="#fff"/><circle cx="1148.5" cy="994.5" r="8.5" fill="#3c78d0" stroke="#a8c8f0" stroke-width="1"/><path d="M1150.5,990.5L1146,994.5L1150.5,998.5" stroke="#fff" stroke-width="2.2" fill="none"/></svg>
<svg class="a" style="left:1156px;top:966px" width="40" height="42" viewBox="1156 966 40 42"><path d="M1160,969H1166V967L1170,971L1166,975V973H1160Z" fill="#38a838" stroke="#186818" stroke-width="0.6"/><path d="M1161,976L1171,974L1173,979L1163,982Z" fill="#88909c" stroke="#333" stroke-width="0.8"/><path d="M1178,972L1186,969L1191,977L1189,982L1181,983L1177,978Z" fill="#38b048" stroke="#187828" stroke-width="0.8"/><path d="M1180,974L1186.5,972.5L1188.5,979L1182,980.5Z" fill="#f4faf4"/><circle cx="1166.5" cy="995" r="7.5" fill="#58b848" stroke="#388828" stroke-width="0.8"/><path d="M1162.5,994.5L1165.5,997.5L1170.5,992" stroke="#fff" stroke-width="2" fill="none"/><path d="M1178,986V1002M1178.5,994L1189,986M1180,993L1188,1002" stroke="#d82020" stroke-width="3" fill="none"/><circle cx="1186.5" cy="999.5" r="4" fill="#e8d830" stroke="#a89810" stroke-width="0.8"/><circle cx="1186.5" cy="999.5" r="1.4" fill="#887808"/></svg>
<div class="t" style="left:1196px;width:74px;text-align:center;top:969.2px;font-size:11px;color:#fff">13:46</div>
<div class="t" style="left:1196px;width:74px;text-align:center;top:987.9px;font-size:11px;color:#fff">четверг</div>
<div class="t" style="left:1196px;width:74px;text-align:center;top:1006.9px;font-size:11px;color:#fff">26.03.2009</div>
</body></html>
